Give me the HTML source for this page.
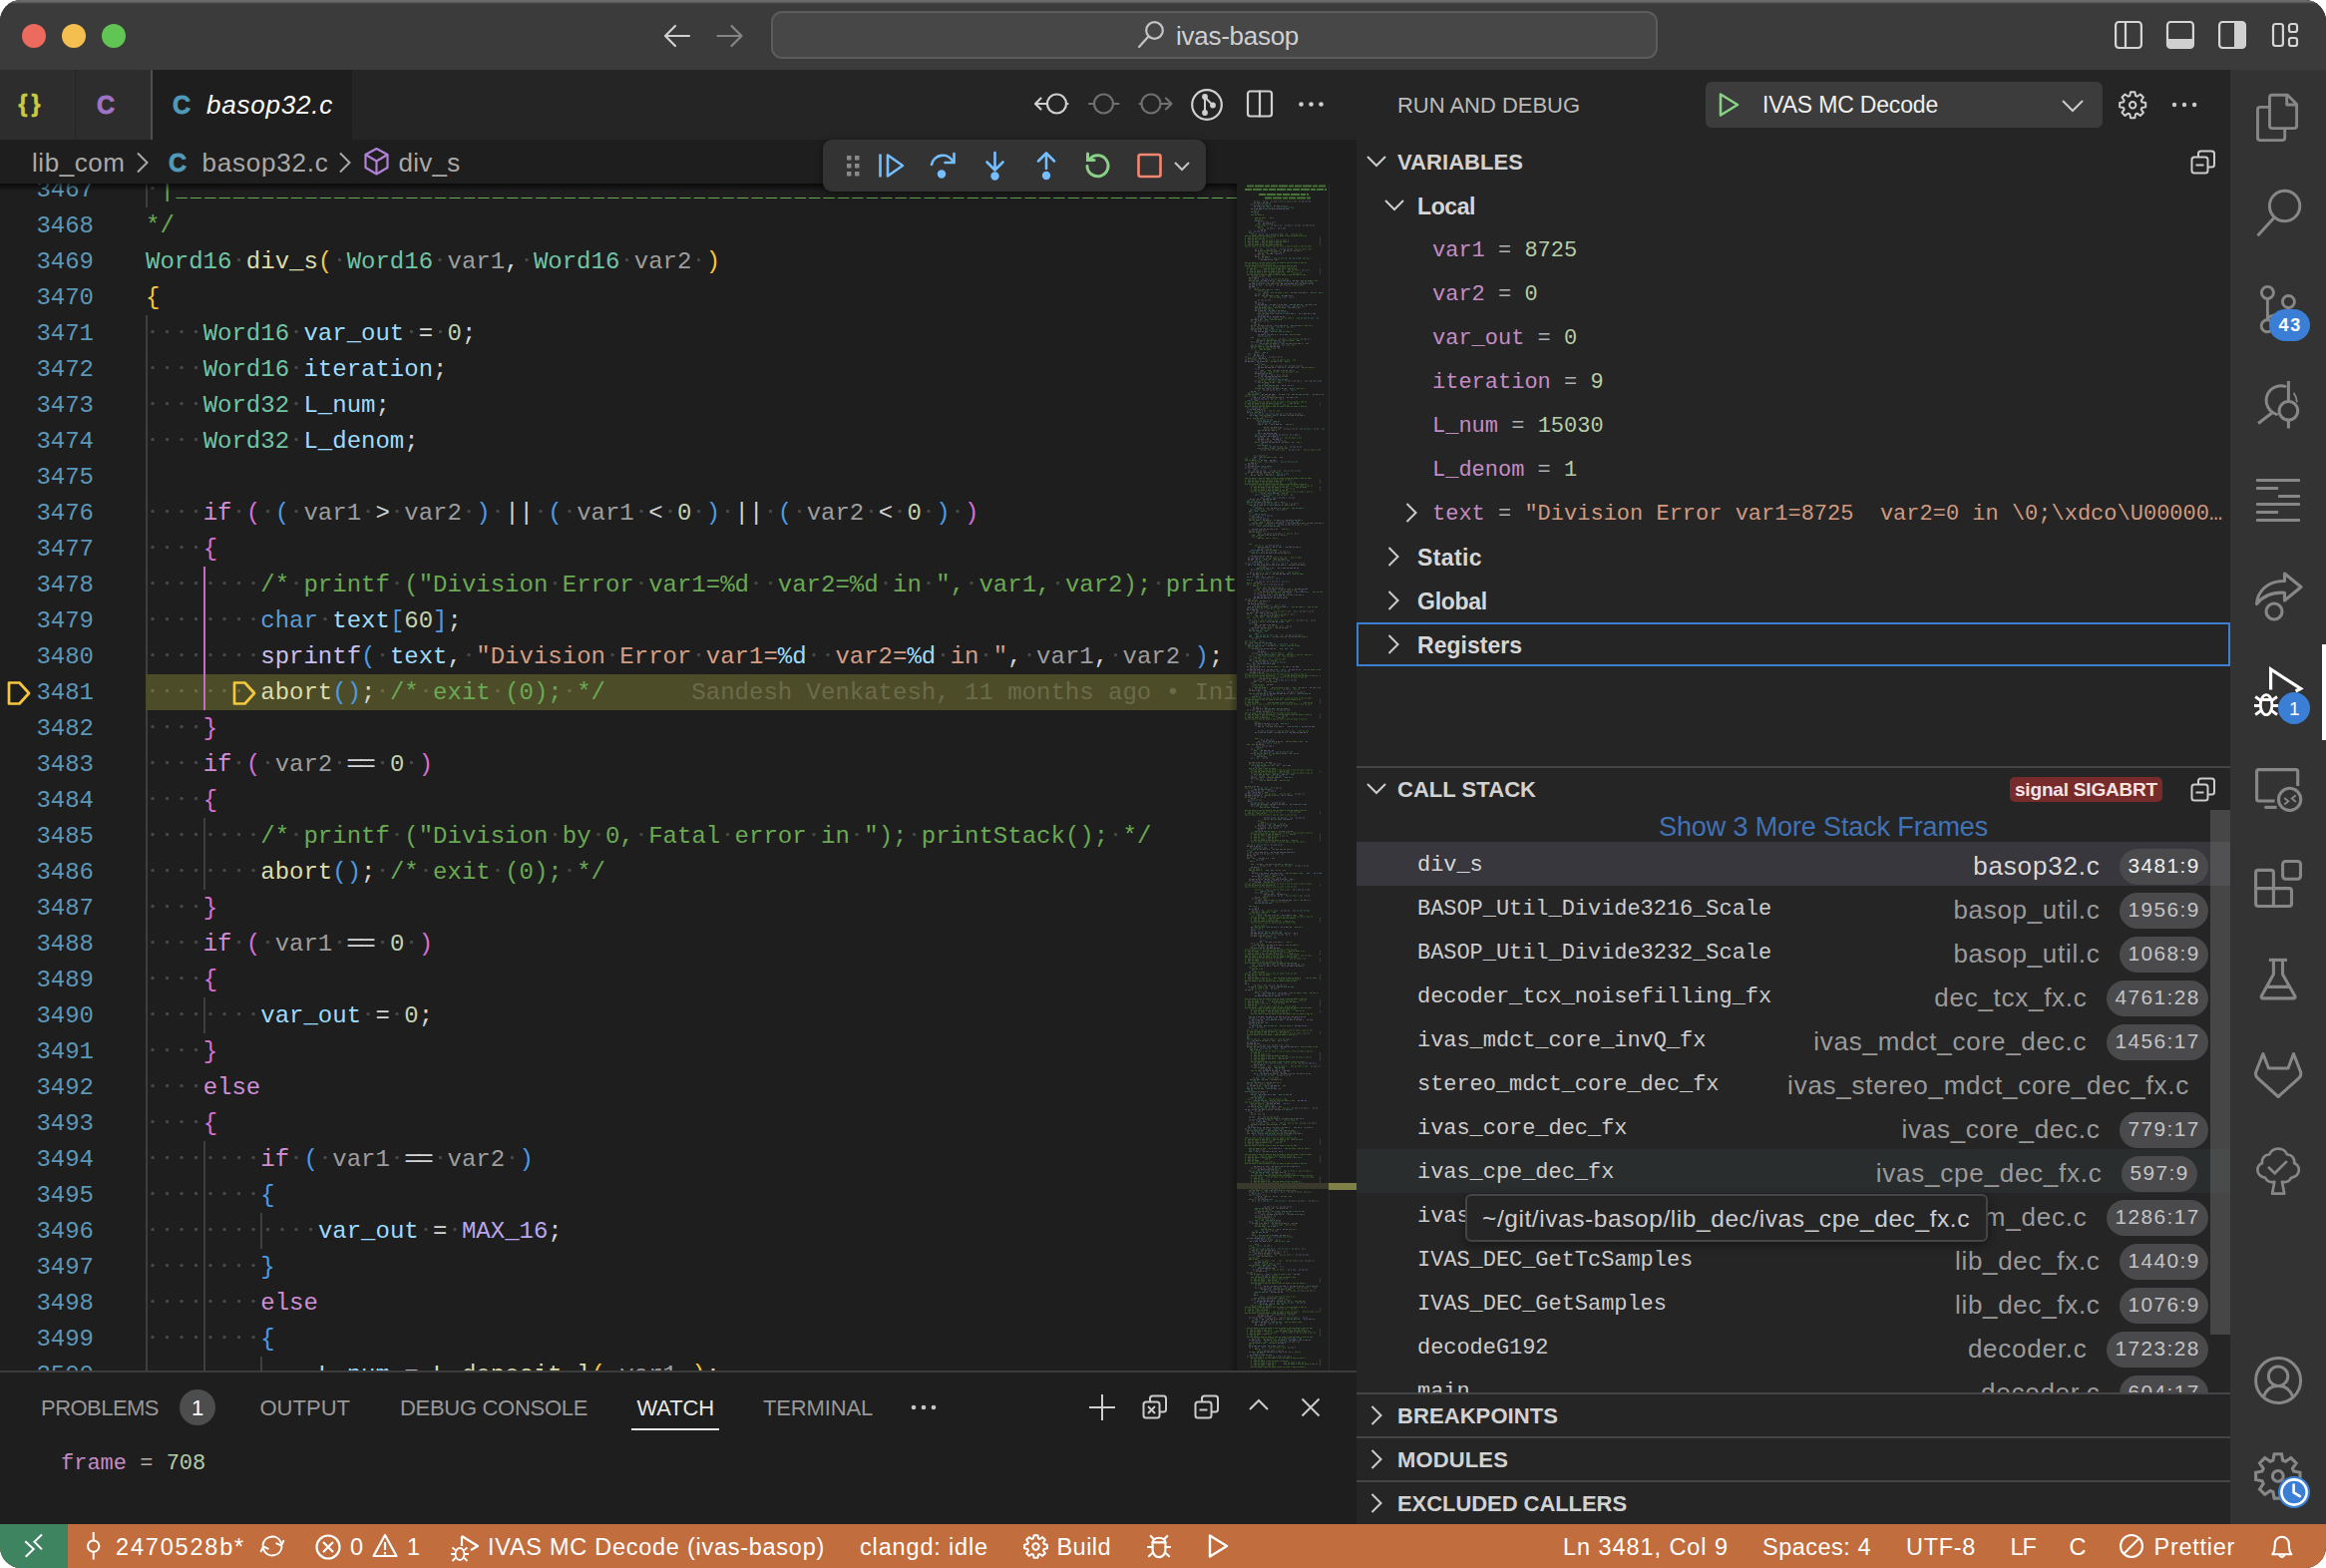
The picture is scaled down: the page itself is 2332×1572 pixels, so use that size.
<!DOCTYPE html>
<html><head><meta charset="utf-8"><title>basop32.c - ivas-basop</title>
<style>
html,body{margin:0;padding:0;background:#fff;}
body{width:2332px;height:1572px;overflow:hidden;font-family:"Liberation Sans",sans-serif;}
#win{position:absolute;left:0;top:0;width:2332px;height:1572px;border-radius:21px;overflow:hidden;background:#1e1e1e;}
.b{position:absolute;display:block;}
.t{position:absolute;white-space:pre;display:block;}
.code{position:absolute;left:0;width:1240px;height:36px;line-height:36px;font-family:"Liberation Mono",monospace;font-size:24px;white-space:pre;color:#d4d4d4;overflow:hidden;}
.ln{position:absolute;left:0;top:1px;width:94px;text-align:right;color:#5a97b8;}
.cd{position:absolute;left:146px;top:1px;}

.w{--d:#484848;background:radial-gradient(circle at 50% 43%,var(--d) 1.3px,transparent 2px)}
.ty{color:#6fc5a6}.fn{color:#dcdcaa}.mc{color:#c9c0f0}.mk{color:#b9a6ee}.pa{color:#9d9d9d}.va{color:#9cdcfe}
.nu{color:#c2d3ad}.kw{color:#d08fd4}.kb{color:#5a9bd5}.b1{color:#f3c73f}.b2{color:#d670d2}.b3{color:#4b9be6}
.cm{color:#6aa953}.cm .w{--d:#414b3c}.st{color:#d59d84}.fs{color:#9cdcfe}.bl{color:#6b6b49}
.hl .w{--d:#6a6a44}
.us{font-weight:bold;font-size:18.7px;letter-spacing:3.21px;margin-left:1.6px}
.eq{display:inline-block;letter-spacing:-4.6px;margin:0 6.9px 0 2.3px;transform:scaleX(1.24);transform-origin:12.1px 50%;}

</style></head><body><div id="win">
<div class="b" style="left:0px;top:0px;width:2332px;height:70px;background:#3b3b3b;"></div><div class="b" style="left:0px;top:0px;width:2332px;height:4px;background:linear-gradient(#6c6c6c,#6a6a6a 35%,#3b3b3b);"></div><div class="b" style="left:0px;top:70px;width:1360px;height:70px;background:#252526;"></div><div class="b" style="left:0px;top:140px;width:1360px;height:44px;background:#1e1e1e;"></div><div class="b" style="left:1360px;top:70px;width:876px;height:1458px;background:#252526;"></div><div class="b" style="left:2236px;top:70px;width:96px;height:1458px;background:#333333;"></div><div class="b" style="left:0px;top:1527.5px;width:2332px;height:45px;background:#c26d3e;"></div><div class="b" style="left:0px;top:1527.5px;width:67.5px;height:45px;background:#3e8461;"></div><div class="b" style="left:22px;top:24px;width:24px;height:24px;background:#ec6a5e;border-radius:50%;"></div><div class="b" style="left:62px;top:24px;width:24px;height:24px;background:#f4bf4f;border-radius:50%;"></div><div class="b" style="left:102px;top:24px;width:24px;height:24px;background:#61c554;border-radius:50%;"></div><svg class="b" style="left:660px;top:20px;" width="90" height="32" viewBox="0 0 90 32"><g fill="none" stroke-width="2.2" stroke-linecap="round" stroke-linejoin="round"><path stroke="#d0d0d0" d="M31 16H7.5M17 6L7 16l10 10"/><path stroke="#858585" d="M59.5 16H83M73.5 6l10 10-10 10"/></g></svg><div class="b" style="left:773px;top:11px;width:889px;height:48px;background:#474747;border:2px solid #5c5c5c;border-radius:11px;box-sizing:border-box;"></div><svg class="b" style="left:1138px;top:18px;" width="32" height="34" viewBox="0 0 32 34"><g fill="none" stroke="#c4c4c4" stroke-width="2.2" stroke-linecap="round"><circle cx="19.5" cy="12.5" r="8.3"/><path d="M13.5 18.5L4 29"/></g></svg><span class="t" style="left:1179.0px;top:18.0px;line-height:36px;font-size:26px;color:#d0d0d0;letter-spacing:-0.273px;">ivas-basop</span><svg class="b" style="left:2116px;top:17px;" width="196" height="36" viewBox="0 0 196 36"><g fill="none" stroke="#d6d6d6" stroke-width="2.200"><rect x="5.100" y="5" width="25.800" height="26" rx="3.200"/><path d="M15 5v26"/><rect x="57" y="5" width="25.900" height="26" rx="3.200"/><path d="M57 22h25.900v6a3 3 0 0 1-3 3h-19.900a3 3 0 0 1-3-3z" fill="#d0d0d0" stroke="none"/><rect x="109.100" y="5" width="25.800" height="26" rx="3.200"/><path d="M124 5h8a3 3 0 0 1 3 3v20a3 3 0 0 1-3 3h-8z" fill="#d0d0d0" stroke="none"/><rect x="163" y="7" width="9.900" height="22" rx="2.500"/><rect x="179" y="7" width="8" height="8" rx="2.300"/><rect x="179" y="21" width="8" height="8" rx="2.300"/></g></svg><div class="b" style="left:0px;top:70px;width:75px;height:70px;background:#2d2d2d;"></div><div class="b" style="left:76px;top:70px;width:75px;height:70px;background:#2d2d2d;"></div><div class="b" style="left:151px;top:70px;width:2px;height:70px;background:#4f4f4f;"></div><div class="b" style="left:153px;top:70px;width:200px;height:70px;background:#1e1e1e;"></div><span class="t" style="left:18.5px;top:88.0px;line-height:32px;font-size:23px;color:#cbcb41;font-weight:bold;-webkit-text-stroke:0.6px #cbcb41;">{</span><span class="t" style="left:31.5px;top:88.0px;line-height:32px;font-size:23px;color:#cbcb41;font-weight:bold;-webkit-text-stroke:0.6px #cbcb41;">}</span><span class="t" style="left:97.0px;top:88.0px;line-height:35px;font-size:25px;color:#a074c4;font-weight:bold;-webkit-text-stroke:0.8px #a074c4;">C</span><span class="t" style="left:173.0px;top:88.0px;line-height:35px;font-size:25px;color:#519aba;font-weight:bold;-webkit-text-stroke:0.8px #519aba;">C</span><span class="t" style="left:207.0px;top:87.0px;line-height:36px;font-size:26px;color:#ffffff;font-style:italic;letter-spacing:0.780px;">basop32.c</span><svg class="b" style="left:1030px;top:84px;" width="310" height="40" viewBox="0 0 310 40"><g fill="none" stroke-width="2.2" stroke-linecap="round" stroke-linejoin="round"><g stroke="#d0d0d0"><circle cx="29.5" cy="20" r="9.5"/><path d="M19 20H8.5M13.5 14.5L8 20l5.500 5.500M39.500 20h1"/></g><g stroke="#707070"><circle cx="76.500" cy="20" r="9.500"/><path d="M62 20h4.500M86.500 20h5"/></g><g stroke="#707070"><circle cx="124" cy="20" r="9.500"/><path d="M112.500 20h1.500M134 20h10M139 14.500l5.500 5.500-5.500 5.500"/></g><g stroke="#d0d0d0"><circle cx="180" cy="21" r="14.800"/><path d="M178 13v16" stroke-width="2"/><path d="M178.500 14l7.500 7.500" stroke-width="2"/></g><g fill="#d0d0d0" stroke="none"><circle cx="178" cy="13" r="2.900"/><circle cx="178" cy="29" r="2.900"/><circle cx="186" cy="21.500" r="2.900"/></g><g stroke="#d0d0d0"><rect x="221" y="7.500" width="24" height="25" rx="2.500"/><path d="M233 7.500v25"/></g><g fill="#d0d0d0" stroke="none"><circle cx="274.500" cy="20.500" r="2.300"/><circle cx="284.500" cy="20.500" r="2.300"/><circle cx="294.500" cy="20.500" r="2.300"/></g></g></svg><span class="t" style="left:32.0px;top:145.0px;line-height:36px;font-size:26px;color:#a9a9a9;letter-spacing:0.559px;">lib_com</span><svg class="b" style="left:134px;top:150px;" width="20" height="26" viewBox="0 0 20 26"><path d="M4 3.500l9.500 9.500L4 22.500" fill="none" stroke="#a9a9a9" stroke-width="2"/></svg><span class="t" style="left:169.0px;top:146.0px;line-height:35px;font-size:25px;color:#519aba;font-weight:bold;-webkit-text-stroke:0.8px #519aba;">C</span><span class="t" style="left:202.5px;top:145.0px;line-height:36px;font-size:26px;color:#a9a9a9;letter-spacing:0.780px;">basop32.c</span><svg class="b" style="left:337px;top:150px;" width="20" height="26" viewBox="0 0 20 26"><path d="M4 3.500l9.500 9.500L4 22.500" fill="none" stroke="#a9a9a9" stroke-width="2"/></svg><svg class="b" style="left:363px;top:146px;" width="30" height="32" viewBox="0 0 30 32"><g fill="none" stroke="#b180d7" stroke-width="2.2" stroke-linejoin="round"><path d="M14.500 3l11 6v13l-11 6.500-11-6.500v-13z"/><path d="M3.500 9l11 6.500 11-6.500M14.500 15.500v13"/></g></svg><span class="t" style="left:399.5px;top:145.0px;line-height:36px;font-size:26px;color:#a9a9a9;letter-spacing:0.261px;">div_s</span><div class="b" style="left:0;top:184px;width:1360px;height:1191px;overflow:hidden;background:#1e1e1e"><div class="b" style="left:0;top:-184px;width:1360px;height:1572px;"><div class="b" style="left:146px;top:172px;width:2px;height:36px;background:#3f3f3f;"></div><div class="b" style="left:146px;top:316px;width:2px;height:1080px;background:#3f3f3f;"></div><div class="b" style="left:204px;top:568px;width:2px;height:144px;background:#c56bc5;"></div><div class="b" style="left:204px;top:820px;width:2px;height:72px;background:#3f3f3f;"></div><div class="b" style="left:204px;top:1000px;width:2px;height:36px;background:#3f3f3f;"></div><div class="b" style="left:204px;top:1144px;width:2px;height:252px;background:#3f3f3f;"></div><div class="b" style="left:261px;top:1216px;width:2px;height:36px;background:#3f3f3f;"></div><div class="b" style="left:261px;top:1360px;width:2px;height:36px;background:#3f3f3f;"></div><div class="b" style="left:146px;top:676px;width:1094px;height:36px;background:#4d4c29;"></div><div class="b" style="left:204px;top:676px;width:2px;height:36px;background:#c56bc5;"></div><div class="code" style="top:172px"><span class="ln">3467</span><span class="cd"><span class="w"> </span><span class="cm">|</span><span class="cm us">__________________________________________________________________________________________</span></span></div><div class="code" style="top:208px"><span class="ln">3468</span><span class="cd"><span class="cm">*/</span></span></div><div class="code" style="top:244px"><span class="ln">3469</span><span class="cd"><span class="ty">Word16</span><span class="w"> </span><span class="fn">div_s</span><span class="b1">(</span><span class="w"> </span><span class="ty">Word16</span><span class="w"> </span><span class="pa">var1</span>,<span class="w"> </span><span class="ty">Word16</span><span class="w"> </span><span class="pa">var2</span><span class="w"> </span><span class="b1">)</span></span></div><div class="code" style="top:280px"><span class="ln">3470</span><span class="cd"><span class="b1">{</span></span></div><div class="code" style="top:316px"><span class="ln">3471</span><span class="cd"><span class="w"> </span><span class="w"> </span><span class="w"> </span><span class="w"> </span><span class="ty">Word16</span><span class="w"> </span><span class="va">var_out</span><span class="w"> </span>=<span class="w"> </span><span class="nu">0</span>;</span></div><div class="code" style="top:352px"><span class="ln">3472</span><span class="cd"><span class="w"> </span><span class="w"> </span><span class="w"> </span><span class="w"> </span><span class="ty">Word16</span><span class="w"> </span><span class="va">iteration</span>;</span></div><div class="code" style="top:388px"><span class="ln">3473</span><span class="cd"><span class="w"> </span><span class="w"> </span><span class="w"> </span><span class="w"> </span><span class="ty">Word32</span><span class="w"> </span><span class="va">L_num</span>;</span></div><div class="code" style="top:424px"><span class="ln">3474</span><span class="cd"><span class="w"> </span><span class="w"> </span><span class="w"> </span><span class="w"> </span><span class="ty">Word32</span><span class="w"> </span><span class="va">L_denom</span>;</span></div><div class="code" style="top:460px"><span class="ln">3475</span><span class="cd"></span></div><div class="code" style="top:496px"><span class="ln">3476</span><span class="cd"><span class="w"> </span><span class="w"> </span><span class="w"> </span><span class="w"> </span><span class="kw">if</span><span class="w"> </span><span class="b2">(</span><span class="w"> </span><span class="b3">(</span><span class="w"> </span><span class="pa">var1</span><span class="w"> </span>&gt;<span class="w"> </span><span class="pa">var2</span><span class="w"> </span><span class="b3">)</span><span class="w"> </span>||<span class="w"> </span><span class="b3">(</span><span class="w"> </span><span class="pa">var1</span><span class="w"> </span>&lt;<span class="w"> </span><span class="nu">0</span><span class="w"> </span><span class="b3">)</span><span class="w"> </span>||<span class="w"> </span><span class="b3">(</span><span class="w"> </span><span class="pa">var2</span><span class="w"> </span>&lt;<span class="w"> </span><span class="nu">0</span><span class="w"> </span><span class="b3">)</span><span class="w"> </span><span class="b2">)</span></span></div><div class="code" style="top:532px"><span class="ln">3477</span><span class="cd"><span class="w"> </span><span class="w"> </span><span class="w"> </span><span class="w"> </span><span class="b2">{</span></span></div><div class="code" style="top:568px"><span class="ln">3478</span><span class="cd"><span class="w"> </span><span class="w"> </span><span class="w"> </span><span class="w"> </span><span class="w"> </span><span class="w"> </span><span class="w"> </span><span class="w"> </span><span class="cm">/*<span class="w"> </span>printf<span class="w"> </span>("Division<span class="w"> </span>Error<span class="w"> </span>var1=%d<span class="w"> </span><span class="w"> </span>var2=%d<span class="w"> </span>in<span class="w"> </span>",<span class="w"> </span>var1,<span class="w"> </span>var2);<span class="w"> </span>printStack();<span class="w"> </span>*/</span></span></div><div class="code" style="top:604px"><span class="ln">3479</span><span class="cd"><span class="w"> </span><span class="w"> </span><span class="w"> </span><span class="w"> </span><span class="w"> </span><span class="w"> </span><span class="w"> </span><span class="w"> </span><span class="kb">char</span><span class="w"> </span><span class="va">text</span><span class="b3">[</span><span class="nu">60</span><span class="b3">]</span>;</span></div><div class="code" style="top:640px"><span class="ln">3480</span><span class="cd"><span class="w"> </span><span class="w"> </span><span class="w"> </span><span class="w"> </span><span class="w"> </span><span class="w"> </span><span class="w"> </span><span class="w"> </span><span class="mc">sprintf</span><span class="b3">(</span><span class="w"> </span><span class="va">text</span>,<span class="w"> </span><span class="st">"Division<span class="w"> </span>Error<span class="w"> </span>var1=</span><span class="fs">%d</span><span class="st"><span class="w"> </span><span class="w"> </span>var2=</span><span class="fs">%d</span><span class="st"><span class="w"> </span>in<span class="w"> </span>"</span>,<span class="w"> </span><span class="pa">var1</span>,<span class="w"> </span><span class="pa">var2</span><span class="w"> </span><span class="b3">)</span>;</span></div><div class="code hl" style="top:676px"><span class="ln">3481</span><span class="cd"><span class="w"> </span><span class="w"> </span><span class="w"> </span><span class="w"> </span><span class="w"> </span><span class="w"> </span><span class="w"> </span><span class="w"> </span><span class="fn">abort</span><span class="b3">()</span>;<span class="w"> </span><span class="cm">/*<span class="w"> </span>exit<span class="w"> </span>(0);<span class="w"> </span>*/</span><span class="bl">      Sandesh Venkatesh, 11 months ago • Initial commit</span></span></div><div class="code" style="top:712px"><span class="ln">3482</span><span class="cd"><span class="w"> </span><span class="w"> </span><span class="w"> </span><span class="w"> </span><span class="b2">}</span></span></div><div class="code" style="top:748px"><span class="ln">3483</span><span class="cd"><span class="w"> </span><span class="w"> </span><span class="w"> </span><span class="w"> </span><span class="kw">if</span><span class="w"> </span><span class="b2">(</span><span class="w"> </span><span class="pa">var2</span><span class="w"> </span><span class="eq">==</span><span class="w"> </span><span class="nu">0</span><span class="w"> </span><span class="b2">)</span></span></div><div class="code" style="top:784px"><span class="ln">3484</span><span class="cd"><span class="w"> </span><span class="w"> </span><span class="w"> </span><span class="w"> </span><span class="b2">{</span></span></div><div class="code" style="top:820px"><span class="ln">3485</span><span class="cd"><span class="w"> </span><span class="w"> </span><span class="w"> </span><span class="w"> </span><span class="w"> </span><span class="w"> </span><span class="w"> </span><span class="w"> </span><span class="cm">/*<span class="w"> </span>printf<span class="w"> </span>("Division<span class="w"> </span>by<span class="w"> </span>0,<span class="w"> </span>Fatal<span class="w"> </span>error<span class="w"> </span>in<span class="w"> </span>");<span class="w"> </span>printStack();<span class="w"> </span>*/</span></span></div><div class="code" style="top:856px"><span class="ln">3486</span><span class="cd"><span class="w"> </span><span class="w"> </span><span class="w"> </span><span class="w"> </span><span class="w"> </span><span class="w"> </span><span class="w"> </span><span class="w"> </span><span class="fn">abort</span><span class="b3">()</span>;<span class="w"> </span><span class="cm">/*<span class="w"> </span>exit<span class="w"> </span>(0);<span class="w"> </span>*/</span></span></div><div class="code" style="top:892px"><span class="ln">3487</span><span class="cd"><span class="w"> </span><span class="w"> </span><span class="w"> </span><span class="w"> </span><span class="b2">}</span></span></div><div class="code" style="top:928px"><span class="ln">3488</span><span class="cd"><span class="w"> </span><span class="w"> </span><span class="w"> </span><span class="w"> </span><span class="kw">if</span><span class="w"> </span><span class="b2">(</span><span class="w"> </span><span class="pa">var1</span><span class="w"> </span><span class="eq">==</span><span class="w"> </span><span class="nu">0</span><span class="w"> </span><span class="b2">)</span></span></div><div class="code" style="top:964px"><span class="ln">3489</span><span class="cd"><span class="w"> </span><span class="w"> </span><span class="w"> </span><span class="w"> </span><span class="b2">{</span></span></div><div class="code" style="top:1000px"><span class="ln">3490</span><span class="cd"><span class="w"> </span><span class="w"> </span><span class="w"> </span><span class="w"> </span><span class="w"> </span><span class="w"> </span><span class="w"> </span><span class="w"> </span><span class="va">var_out</span><span class="w"> </span>=<span class="w"> </span><span class="nu">0</span>;</span></div><div class="code" style="top:1036px"><span class="ln">3491</span><span class="cd"><span class="w"> </span><span class="w"> </span><span class="w"> </span><span class="w"> </span><span class="b2">}</span></span></div><div class="code" style="top:1072px"><span class="ln">3492</span><span class="cd"><span class="w"> </span><span class="w"> </span><span class="w"> </span><span class="w"> </span><span class="kw">else</span></span></div><div class="code" style="top:1108px"><span class="ln">3493</span><span class="cd"><span class="w"> </span><span class="w"> </span><span class="w"> </span><span class="w"> </span><span class="b2">{</span></span></div><div class="code" style="top:1144px"><span class="ln">3494</span><span class="cd"><span class="w"> </span><span class="w"> </span><span class="w"> </span><span class="w"> </span><span class="w"> </span><span class="w"> </span><span class="w"> </span><span class="w"> </span><span class="kw">if</span><span class="w"> </span><span class="b3">(</span><span class="w"> </span><span class="pa">var1</span><span class="w"> </span><span class="eq">==</span><span class="w"> </span><span class="pa">var2</span><span class="w"> </span><span class="b3">)</span></span></div><div class="code" style="top:1180px"><span class="ln">3495</span><span class="cd"><span class="w"> </span><span class="w"> </span><span class="w"> </span><span class="w"> </span><span class="w"> </span><span class="w"> </span><span class="w"> </span><span class="w"> </span><span class="b3">{</span></span></div><div class="code" style="top:1216px"><span class="ln">3496</span><span class="cd"><span class="w"> </span><span class="w"> </span><span class="w"> </span><span class="w"> </span><span class="w"> </span><span class="w"> </span><span class="w"> </span><span class="w"> </span><span class="w"> </span><span class="w"> </span><span class="w"> </span><span class="w"> </span><span class="va">var_out</span><span class="w"> </span>=<span class="w"> </span><span class="mk">MAX_16</span>;</span></div><div class="code" style="top:1252px"><span class="ln">3497</span><span class="cd"><span class="w"> </span><span class="w"> </span><span class="w"> </span><span class="w"> </span><span class="w"> </span><span class="w"> </span><span class="w"> </span><span class="w"> </span><span class="b3">}</span></span></div><div class="code" style="top:1288px"><span class="ln">3498</span><span class="cd"><span class="w"> </span><span class="w"> </span><span class="w"> </span><span class="w"> </span><span class="w"> </span><span class="w"> </span><span class="w"> </span><span class="w"> </span><span class="kw">else</span></span></div><div class="code" style="top:1324px"><span class="ln">3499</span><span class="cd"><span class="w"> </span><span class="w"> </span><span class="w"> </span><span class="w"> </span><span class="w"> </span><span class="w"> </span><span class="w"> </span><span class="w"> </span><span class="b3">{</span></span></div><div class="code" style="top:1360px"><span class="ln">3500</span><span class="cd"><span class="w"> </span><span class="w"> </span><span class="w"> </span><span class="w"> </span><span class="w"> </span><span class="w"> </span><span class="w"> </span><span class="w"> </span><span class="w"> </span><span class="w"> </span><span class="w"> </span><span class="w"> </span><span class="va">L_num</span><span class="w"> </span>=<span class="w"> </span><span class="fn">L_deposit_l</span><span class="b1">(</span><span class="w"> </span><span class="pa">var1</span><span class="w"> </span><span class="b1">)</span>;</span></div><svg class="b" style="left:5.5px;top:681.5px;" width="27" height="27" viewBox="0 0 27 27"><path d="M3 2.500h10.500l9.500 10.500-9.500 10.500H3z" fill="none" stroke="#f5c73d" stroke-width="2.700" stroke-linejoin="round"/></svg><svg class="b" style="left:231.5px;top:681.5px;" width="27" height="27" viewBox="0 0 27 27"><path d="M3 2.500h10.500l9.500 10.500-9.500 10.500H3z" fill="none" stroke="#f5c73d" stroke-width="2.700" stroke-linejoin="round"/></svg></div></div><div class="b" style="left:0px;top:184px;width:1240px;height:8px;background:linear-gradient(#000000aa,#00000000);"></div><svg class="b" style="left:1240px;top:184px;background:#1e1e1e;" width="92" height="1191" viewBox="0 0 92 1191"><path d="M17 18.0h6M26 18.0h5M34 18.0h8M17 19.5h18M17 22.5h18M37 22.5h14M32 25.5h6M17 30.0h5M24 37.5h3M35 39.0h4M34 42.0h12M48 42.0h8M58 42.0h6M21 43.5h4M24 46.5h5M12 48.0h3M15 51.0h5M49 51.0h3M18 66.0h4M47 67.5h8M57 67.5h8M34 69.0h14M30 70.5h6M25 73.5h8M15 93.0h6M22 93.0h6M24 97.5h14M12 100.5h18M31 100.5h12M63 100.5h14M29 102.0h8M40 102.0h14M12 105.0h3M17 105.0h5M54 109.5h18M18 111.0h6M26 111.0h6M52 112.5h4M21 117.0h6M28 117.0h6M18 118.5h3M33 121.5h10M44 121.5h6M69 121.5h12M52 124.5h12M32 127.5h18M26 130.5h12M21 132.0h12M80 135.0h3M14 136.5h12M18 138.0h14M14 142.5h5M21 142.5h14M23 147.0h3M31 151.5h10M42 156.0h8M64 156.0h10M23 160.5h5M45 160.5h3M49 160.5h18M33 162.0h10M17 171.0h5M17 172.5h10M32 174.0h14M14 177.0h12M34 178.5h12M39 183.0h12M52 183.0h14M51 184.5h12M18 186.0h5M37 187.5h14M34 192.0h4M40 192.0h4M46 192.0h5M18 193.5h4M24 193.5h3M18 198.0h12M48 198.0h18M27 201.0h5M28 204.0h5M36 205.5h14M21 207.0h3M42 211.5h12M76 211.5h12M35 213.0h4M30 214.5h18M50 214.5h12M43 216.0h4M10 225.0h3M13 226.5h6M18 228.0h12M49 231.0h18M43 232.5h6M51 232.5h18M25 234.0h12M27 244.5h5M34 244.5h12M47 246.0h14M21 249.0h3M30 255.0h3M36 255.0h10M21 256.5h12M21 258.0h14M38 258.0h12M45 259.5h8M55 259.5h3M40 264.0h6M48 264.0h3M24 267.0h5M52 267.0h12M24 277.5h6M11 280.5h10M11 283.5h8M24 285.0h10M33 288.0h12M11 289.5h14M14 291.0h3M20 291.0h18M14 292.5h5M24 310.5h5M54 312.0h3M18 319.5h18M38 319.5h4M44 319.5h4M45 321.0h18M19 325.5h8M30 325.5h3M34 325.5h10M24 331.5h5M12 333.0h12M12 336.0h10M26 337.5h8M37 337.5h10M49 337.5h18M18 339.0h3M30 340.5h18M70 340.5h18M28 342.0h10M68 342.0h4M15 346.5h14M30 346.5h12M27 351.0h10M38 351.0h10M21 352.5h14M29 363.0h6M56 364.5h8M21 366.0h14M34 369.0h6M43 369.0h10M29 370.5h14M44 370.5h10M14 373.5h14M11 375.0h3M48 375.0h3M32 376.5h3M11 378.0h5M8 381.0h6M54 381.0h14M17 382.5h14M32 382.5h18M52 382.5h18M23 384.0h6M26 385.5h12M10 391.5h4M16 391.5h18M16 393.0h10M25 394.5h4M26 396.0h10M17 400.5h8M32 406.5h18M23 409.5h10M17 411.0h10M23 412.5h12M50 412.5h18M30 414.0h6M37 415.5h14M8 417.0h6M16 417.0h4M23 418.5h10M11 420.0h4M17 420.0h3M20 421.5h8M17 423.0h18M34 424.5h18M15 426.0h8M24 426.0h4M16 429.0h18M63 429.0h14M10 430.5h6M30 430.5h10M24 432.0h10M35 432.0h18M54 432.0h4M60 438.0h12M74 438.0h5M23 439.5h5M50 439.5h3M23 442.5h18M43 444.0h4M24 445.5h12M39 445.5h5M45 445.5h6M12 447.0h10M31 447.0h3M44 453.0h3M49 453.0h18M36 454.5h14M15 456.0h8M8 460.5h3M8 462.0h10M31 463.5h10M15 466.5h14M54 466.5h3M21 469.5h8M15 471.0h18M18 475.5h5M13 478.5h3M16 481.5h3M13 483.0h10M10 484.5h14M46 484.5h8M13 486.0h10M30 487.5h12M45 487.5h4M13 489.0h12M26 489.0h6M33 489.0h5M13 490.5h14M23 496.5h12M36 496.5h5M17 498.0h12M54 498.0h6M23 499.5h3M62 505.5h8M73 505.5h12M18 507.0h12M46 507.0h8M12 508.5h12M51 510.0h18M10 523.5h4M16 525.0h8M16 526.5h10M28 528.0h10M26 529.5h10M18 541.5h8M27 541.5h10M39 541.5h3M28 543.0h8M30 544.5h18M21 549.0h18M38 550.5h6M32 559.5h14M69 559.5h3M19 561.0h10M14 567.0h4M23 570.0h3M14 571.5h5M36 571.5h14M53 571.5h3M57 571.5h5M20 576.0h3M26 576.0h5M12 580.5h14M29 580.5h6M33 582.0h12M35 583.5h3M17 592.5h4M30 594.0h3M30 597.0h6M14 600.0h3M8 604.5h14M21 606.0h5M58 612.0h10M8 613.5h18M28 613.5h14M8 615.0h14M24 615.0h5M14 616.5h5M33 622.5h18M21 642.0h14M32 643.5h3M37 643.5h14M18 645.0h4M21 646.5h8M31 646.5h4M37 646.5h4M42 649.5h14M10 664.5h14M34 666.0h3M23 667.5h10M36 667.5h6M34 670.5h5M16 672.0h10M27 672.0h10M10 673.5h5M10 675.0h6M22 676.5h10M20 682.5h6M29 682.5h18M23 684.0h12M58 684.0h14M39 688.5h5M15 691.5h18M34 691.5h12M12 697.5h14M28 697.5h5M36 697.5h14M47 699.0h8M31 709.5h5M29 711.0h3M40 712.5h10M68 714.0h5M18 715.5h5M15 717.0h10M64 718.5h10M15 729.0h8M28 733.5h14M14 748.5h4M14 750.0h5M35 750.0h6M43 750.0h3M14 753.0h18M34 753.0h5M41 753.0h6M57 753.0h4M14 754.5h6M23 756.0h3M29 760.5h18M30 763.5h18M21 765.0h18M14 766.5h14M45 784.5h4M50 784.5h18M24 787.5h3M12 790.5h3M8 802.5h4M17 804.0h8M40 804.0h10M11 805.5h8M29 805.5h3M34 807.0h8M8 808.5h8M28 810.0h3M39 835.5h14M55 835.5h14M23 837.0h5M50 838.5h18M70 838.5h6M12 840.0h18M12 841.5h14M29 841.5h3M20 846.0h8M16 859.5h18M23 864.0h10M35 864.0h12M17 865.5h12M17 882.0h10M48 882.0h4M14 885.0h14M74 885.0h10M39 888.0h4M26 889.5h18M24 892.5h18M44 892.5h14M60 892.5h14M40 894.0h14M16 897.0h6M25 898.5h6M34 898.5h12M18 901.5h10M10 903.0h12M13 904.5h12M28 904.5h4M14 906.0h4M21 910.5h10M14 912.0h14M26 921.0h18M11 925.5h14M32 927.0h12M55 927.0h18M22 928.5h14M38 928.5h10M18 930.0h8M14 931.5h3M14 933.0h5M21 937.5h8M45 937.5h8M63 942.0h18M14 943.5h14M11 945.0h6M26 946.5h8M36 946.5h18M68 946.5h8M43 949.5h3M53 951.0h8M49 952.5h18M26 970.5h14M17 985.5h10M35 985.5h14M14 987.0h14M27 990.0h18M35 991.5h6M48 993.0h10M15 1008.0h8M35 1008.0h10M12 1011.0h10M25 1011.0h18M51 1011.0h14M21 1012.5h4M26 1014.0h4M36 1015.5h5M44 1015.5h6M21 1018.5h3M25 1018.5h12M15 1020.0h4M52 1020.0h18M72 1020.0h10M27 1026.0h14M25 1027.5h8M35 1027.5h3M40 1027.5h12M25 1029.0h3M29 1029.0h6M35 1030.5h4M26 1032.0h3M38 1032.0h10M50 1032.0h4M30 1033.5h18M51 1033.5h18M18 1035.0h18M30 1039.5h14M15 1042.5h18M35 1042.5h18M55 1042.5h6M18 1045.5h6M35 1050.0h6M43 1054.5h10M39 1059.0h4M23 1060.5h12M18 1063.5h4M27 1065.0h8M55 1068.0h8M12 1071.0h14M28 1071.0h18M47 1071.0h4M18 1072.5h18M37 1072.5h6M12 1074.0h10M38 1074.0h3M25 1075.5h12M68 1080.0h10M18 1081.5h6M31 1084.5h3M43 1086.0h4M29 1089.0h4M19 1090.5h12M10 1092.0h8M34 1105.5h18M53 1105.5h14M24 1108.5h10M41 1110.0h5M61 1110.0h18M17 1113.0h4M30 1117.5h6M14 1119.0h5M40 1120.5h8M51 1120.5h4M21 1134.0h12M44 1134.0h5M52 1134.0h6M21 1135.5h14M28 1137.0h12M25 1138.5h3M30 1138.5h18M25 1140.0h14M15 1141.5h18M43 1143.0h3M12 1159.5h12M27 1159.5h8M52 1161.0h12M51 1167.0h8M12 1171.5h6M39 1171.5h12M52 1171.5h4M10 1176.0h18M31 1176.0h4M47 1176.0h8" stroke="#b8b8b8" stroke-opacity="0.34" stroke-width="0.900" stroke-dasharray="2 1 3 1 1 1" fill="none"/><path d="M43 18.0h18M28 25.5h3M17 27.0h6M14 31.5h14M18 34.5h12M18 36.0h8M21 39.0h3M18 42.0h14M21 45.0h6M55 51.0h10M8 52.5h62M11 54.0h28M8 54.0h1M83 54.0h1M11 55.5h9M22 55.5h6M8 55.5h1M83 55.5h1M11 57.0h12M25 57.0h28M8 57.0h1M83 57.0h1M11 58.5h12M25 58.5h28M8 58.5h1M83 58.5h1M11 60.0h34M8 60.0h1M83 60.0h1M11 61.5h34M8 61.5h1M83 61.5h1M8 63.0h68M58 66.0h18M23 67.5h6M30 67.5h14M21 69.0h10M21 70.5h6M25 72.0h3M21 75.0h14M66 75.0h8M38 76.5h3M8 79.5h62M11 81.0h28M8 81.0h1M83 81.0h1M8 82.5h52M10 84.0h50M13 85.5h6M27 85.5h22M51 85.5h9M10 85.5h1M83 85.5h1M13 87.0h34M51 87.0h22M10 87.0h1M83 87.0h1M13 88.5h34M50 88.5h6M10 88.5h1M83 88.5h1M13 90.0h16M32 90.0h16M56 90.0h9M10 90.0h1M83 90.0h1M10 91.5h60M34 96.0h6M41 96.0h12M12 97.5h10M64 97.5h18M35 99.0h12M49 99.0h8M56 102.0h12M18 106.5h10M21 108.0h12M34 109.5h18M74 109.5h6M25 112.5h18M27 114.0h4M33 114.0h18M65 123.0h5M18 124.5h18M38 124.5h12M21 129.0h6M21 130.5h3M44 135.0h14M28 136.5h4M34 136.5h12M17 141.0h6M68 142.5h8M50 144.0h8M14 145.5h18M34 145.5h3M42 148.5h14M53 151.5h12M20 156.0h4M26 156.0h14M52 156.0h10M46 157.5h12M29 159.0h6M29 160.5h14M69 160.5h3M50 162.0h3M55 162.0h4M14 163.5h14M22 165.0h18M23 166.5h12M18 169.5h5M11 175.5h8M28 177.0h5M36 177.0h18M56 177.0h3M18 181.5h5M28 183.0h4M34 183.0h3M65 184.5h14M24 187.5h4M31 187.5h3M32 189.0h10M45 189.0h18M41 193.5h10M21 195.0h6M24 196.5h6M32 198.0h8M21 199.5h18M41 199.5h3M21 204.0h5M34 204.0h8M18 205.5h10M53 205.5h5M60 205.5h8M11 211.5h12M8 213.0h12M23 213.0h10M34 216.0h6M8 219.0h62M11 220.5h34M53 220.5h9M8 220.5h1M83 220.5h1M11 222.0h22M36 222.0h6M46 222.0h6M8 222.0h1M83 222.0h1M8 223.5h62M26 225.0h5M20 226.5h8M32 228.0h6M40 228.0h4M23 232.5h12M16 235.5h10M49 241.5h8M27 246.0h18M21 247.5h6M35 247.5h5M48 255.0h18M18 259.5h5M60 259.5h5M21 265.5h18M41 265.5h10M31 267.0h18M67 267.0h18M17 274.5h4M23 274.5h18M43 274.5h4M8 276.0h4M8 277.5h14M14 279.0h12M35 289.5h8M8 295.5h68M11 297.0h9M22 297.0h6M30 297.0h28M8 297.0h1M83 297.0h1M11 298.5h34M8 298.5h1M83 298.5h1M11 300.0h34M53 300.0h6M8 300.0h1M83 300.0h1M8 301.5h62M14 303.0h62M17 304.5h34M59 304.5h12M14 304.5h1M83 304.5h1M17 306.0h28M49 306.0h9M14 306.0h1M83 306.0h1M17 307.5h34M14 307.5h1M83 307.5h1M14 309.0h62M45 310.5h6M40 312.0h12M30 315.0h3M15 318.0h8M10 321.0h5M23 322.5h8M48 322.5h5M46 325.5h6M12 328.5h4M24 328.5h6M12 337.5h12M23 339.0h14M59 339.0h4M15 340.5h12M60 342.0h5M21 343.5h4M45 346.5h8M12 349.5h14M21 351.0h4M50 351.0h6M15 352.5h3M15 354.0h10M21 355.5h6M29 355.5h5M36 355.5h5M12 361.5h4M18 363.0h8M29 367.5h14M29 375.0h18M54 375.0h12M27 376.5h4M37 376.5h14M18 378.0h10M19 390.0h8M36 390.0h12M56 391.5h12M10 400.5h5M16 402.0h10M16 403.5h5M26 405.0h4M31 405.0h10M20 406.5h4M51 406.5h5M17 408.0h6M43 408.0h18M34 409.5h10M76 409.5h10M30 411.0h6M38 411.0h10M47 414.0h3M11 418.5h10M38 423.0h5M20 424.5h12M55 424.5h14M71 424.5h10M40 426.0h3M37 429.0h18M10 432.0h5M23 433.5h5M30 433.5h18M10 435.0h4M16 435.0h12M24 438.0h18M44 438.0h14M15 439.5h6M18 442.5h3M31 444.0h10M24 447.0h5M21 450.0h5M38 453.0h4M58 454.5h14M8 459.0h12M54 462.0h6M44 463.5h5M51 463.5h8M11 465.0h14M43 466.5h3M34 471.0h14M41 472.5h6M50 472.5h8M60 472.5h6M68 472.5h8M12 474.0h8M22 474.0h3M26 474.0h18M46 474.0h14M22 477.0h8M38 477.0h12M18 478.5h14M34 478.5h6M25 484.5h4M30 484.5h14M67 487.5h18M8 492.0h62M11 493.5h28M47 493.5h34M8 493.5h1M83 493.5h1M8 495.0h62M32 498.0h4M29 499.5h12M14 501.0h4M17 502.5h10M15 504.0h14M18 505.5h14M35 505.5h18M56 505.5h4M33 507.0h10M57 507.0h6M27 508.5h3M12 511.5h10M23 511.5h8M53 511.5h5M8 516.0h68M11 517.5h34M48 517.5h16M8 517.5h1M83 517.5h1M11 519.0h12M8 519.0h1M83 519.0h1M11 520.5h12M31 520.5h28M67 520.5h9M8 520.5h1M83 520.5h1M8 522.0h68M27 525.0h3M40 526.5h14M8 531.0h52M11 532.5h28M41 532.5h34M8 532.5h1M83 532.5h1M11 534.0h22M35 534.0h6M45 534.0h6M8 534.0h1M83 534.0h1M11 535.5h22M41 535.5h6M8 535.5h1M83 535.5h1M8 537.0h62M18 540.0h5M37 543.0h5M41 549.0h18M62 549.0h10M18 556.5h5M49 559.5h18M37 561.0h6M10 562.5h3M15 562.5h6M25 564.0h3M20 567.0h5M17 568.5h4M20 571.5h14M32 573.0h5M20 574.5h10M12 582.0h18M25 585.0h4M22 586.5h4M28 586.5h12M14 588.0h62M17 589.5h22M43 589.5h9M14 589.5h1M83 589.5h1M14 591.0h62M22 592.5h12M34 594.0h3M14 595.5h6M23 595.5h5M31 595.5h14M23 598.5h18M43 598.5h10M8 606.0h5M28 610.5h4M28 612.0h12M43 612.0h12M15 618.0h10M20 622.5h12M23 625.5h10M8 628.5h62M11 630.0h34M53 630.0h12M8 630.0h1M83 630.0h1M11 631.5h6M20 631.5h9M8 631.5h1M83 631.5h1M8 633.0h52M53 636.0h4M27 637.5h5M34 637.5h12M24 640.5h5M43 642.0h6M21 643.5h8M27 649.5h14M14 651.0h62M17 652.5h28M53 652.5h6M14 652.5h1M83 652.5h1M17 654.0h34M14 654.0h1M83 654.0h1M17 655.5h6M31 655.5h9M14 655.5h1M83 655.5h1M17 657.0h22M14 657.0h1M83 657.0h1M17 658.5h34M55 658.5h6M14 658.5h1M83 658.5h1M14 660.0h56M10 663.0h8M16 667.5h6M43 667.5h14M10 676.5h4M35 676.5h4M13 679.5h5M14 682.5h4M44 684.0h12M12 687.0h14M12 688.5h14M46 688.5h3M49 691.5h18M28 694.5h5M36 694.5h4M26 696.0h12M27 700.5h10M8 702.0h68M11 703.5h28M8 703.5h1M83 703.5h1M8 705.0h52M18 708.0h8M29 708.0h5M36 708.0h18M27 712.5h10M49 714.0h18M26 715.5h5M21 718.5h3M27 718.5h14M57 718.5h5M34 720.0h3M39 720.0h14M12 724.5h8M30 729.0h12M15 730.5h8M25 730.5h8M12 732.0h18M63 733.5h4M14 735.0h62M17 736.5h12M32 736.5h28M14 736.5h1M83 736.5h1M17 738.0h6M25 738.0h16M14 738.0h1M83 738.0h1M17 739.5h28M48 739.5h9M14 739.5h1M83 739.5h1M14 741.0h46M17 744.0h14M18 745.5h10M58 745.5h8M22 754.5h8M50 760.5h5M17 763.5h12M49 763.5h14M14 765.0h4M8 768.0h52M11 769.5h12M26 769.5h22M52 769.5h16M8 769.5h1M83 769.5h1M11 771.0h16M29 771.0h28M8 771.0h1M83 771.0h1M11 772.5h34M53 772.5h9M8 772.5h1M83 772.5h1M8 774.0h68M8 775.5h52M11 777.0h34M53 777.0h16M8 777.0h1M83 777.0h1M11 778.5h12M8 778.5h1M83 778.5h1M11 780.0h34M8 780.0h1M83 780.0h1M8 781.5h52M15 783.0h4M65 783.0h4M15 784.5h14M37 784.5h5M12 786.0h4M17 786.0h4M15 787.5h8M17 790.5h12M8 792.0h52M11 793.5h9M22 793.5h12M8 793.5h1M83 793.5h1M11 795.0h9M8 795.0h1M83 795.0h1M11 796.5h22M37 796.5h28M69 796.5h12M8 796.5h1M83 796.5h1M11 798.0h28M42 798.0h22M8 798.0h1M83 798.0h1M8 799.5h52M27 804.0h3M22 805.5h5M14 807.0h18M18 810.0h8M53 811.5h18M73 811.5h8M8 817.5h62M11 819.0h16M31 819.0h28M63 819.0h6M8 819.0h1M83 819.0h1M11 820.5h16M35 820.5h28M8 820.5h1M83 820.5h1M11 822.0h22M37 822.0h12M8 822.0h1M83 822.0h1M11 823.5h9M8 823.5h1M83 823.5h1M11 825.0h9M23 825.0h22M48 825.0h12M8 825.0h1M83 825.0h1M8 826.5h68M14 828.0h46M17 829.5h34M59 829.5h9M14 829.5h1M83 829.5h1M17 831.0h12M31 831.0h22M14 831.0h1M83 831.0h1M14 832.5h62M22 844.5h3M43 844.5h14M10 849.0h66M13 850.5h28M43 850.5h9M10 850.5h1M83 850.5h1M13 852.0h22M39 852.0h34M10 852.0h1M83 852.0h1M10 853.5h50M10 855.0h4M26 858.0h14M42 858.0h14M35 859.5h4M10 864.0h10M49 864.0h3M64 865.5h18M13 867.0h8M38 867.0h4M13 868.5h5M14 870.0h62M17 871.5h6M14 871.5h1M83 871.5h1M17 873.0h16M14 873.0h1M83 873.0h1M17 874.5h34M14 874.5h1M83 874.5h1M17 876.0h22M41 876.0h34M14 876.0h1M83 876.0h1M17 877.5h22M42 877.5h9M14 877.5h1M83 877.5h1M17 879.0h12M14 879.0h1M83 879.0h1M14 880.5h56M54 882.0h6M31 885.0h3M37 885.0h14M54 885.0h18M17 886.5h18M45 888.0h3M14 889.5h10M25 897.0h3M31 897.0h12M36 901.5h8M23 903.0h14M46 904.5h3M20 906.0h6M14 916.5h14M11 918.0h5M24 918.0h5M32 918.0h14M33 919.5h6M41 919.5h18M8 921.0h3M12 921.0h12M14 922.5h14M21 924.0h18M42 925.5h4M46 927.0h6M11 930.0h4M21 936.0h3M26 936.0h10M30 937.5h14M47 939.0h14M15 942.0h18M35 942.0h5M43 942.0h6M51 942.0h10M30 943.5h14M10 949.5h18M47 949.5h12M29 951.0h14M10 952.5h4M40 952.5h8M43 954.0h12M8 957.0h52M11 958.5h22M36 958.5h16M55 958.5h12M8 958.5h1M83 958.5h1M11 960.0h28M43 960.0h6M8 960.0h1M83 960.0h1M11 961.5h6M19 961.5h16M39 961.5h6M8 961.5h1M83 961.5h1M11 963.0h16M8 963.0h1M83 963.0h1M8 964.5h52M12 967.5h18M48 967.5h12M61 967.5h14M25 969.0h4M12 970.5h4M8 973.5h68M11 975.0h9M24 975.0h34M8 975.0h1M83 975.0h1M11 976.5h28M43 976.5h22M8 976.5h1M83 976.5h1M11 978.0h9M28 978.0h6M8 978.0h1M83 978.0h1M11 979.5h12M8 979.5h1M83 979.5h1M11 981.0h28M8 981.0h1M83 981.0h1M8 982.5h62M29 985.5h4M34 988.5h8M12 990.0h14M47 990.0h14M62 990.0h14M43 991.5h6M31 993.0h14M14 994.5h62M17 996.0h9M30 996.0h28M66 996.0h12M14 996.0h1M83 996.0h1M17 997.5h9M14 997.5h1M83 997.5h1M17 999.0h16M14 999.0h1M83 999.0h1M17 1000.5h16M36 1000.5h28M14 1000.5h1M83 1000.5h1M17 1002.0h28M47 1002.0h6M55 1002.0h12M14 1002.0h1M83 1002.0h1M14 1003.5h62M18 1006.5h8M12 1009.5h14M28 1009.5h4M42 1009.5h18M67 1011.0h8M28 1015.5h6M52 1015.5h3M18 1029.0h5M21 1030.5h12M18 1036.5h8M21 1038.0h18M18 1039.5h3M24 1039.5h3M18 1044.0h14M35 1044.0h12M49 1044.0h10M27 1047.0h4M24 1048.5h14M52 1048.5h8M18 1050.0h4M15 1053.0h4M18 1056.0h18M46 1056.0h10M38 1060.5h10M12 1065.0h5M15 1066.5h3M15 1069.5h6M24 1069.5h6M31 1069.5h3M23 1074.0h12M43 1074.0h14M12 1077.0h10M12 1078.5h5M18 1078.5h4M21 1080.0h18M42 1080.0h4M49 1080.0h18M26 1081.5h5M25 1083.0h14M12 1084.5h12M22 1086.0h14M36 1089.0h12M13 1093.5h14M29 1093.5h5M37 1093.5h18M35 1095.0h6M14 1096.5h46M17 1098.0h16M35 1098.0h16M14 1098.0h1M83 1098.0h1M17 1099.5h12M31 1099.5h9M14 1099.5h1M83 1099.5h1M17 1101.0h28M14 1101.0h1M83 1101.0h1M14 1102.5h56M60 1107.0h14M37 1108.5h18M49 1110.0h10M31 1116.0h10M42 1116.0h18M17 1117.5h12M37 1117.5h4M43 1117.5h5M41 1119.0h14M58 1120.5h3M62 1120.5h6M32 1123.5h6M40 1123.5h4M14 1125.0h14M8 1126.5h62M11 1128.0h22M41 1128.0h9M54 1128.0h6M8 1128.0h1M83 1128.0h1M11 1129.5h6M20 1129.5h12M8 1129.5h1M83 1129.5h1M11 1131.0h22M36 1131.0h28M66 1131.0h16M8 1131.0h1M83 1131.0h1M8 1132.5h52M43 1137.0h6M50 1137.0h14M48 1141.5h18M10 1147.5h66M13 1149.0h22M43 1149.0h28M10 1149.0h1M83 1149.0h1M13 1150.5h22M39 1150.5h34M10 1150.5h1M83 1150.5h1M13 1152.0h12M29 1152.0h12M45 1152.0h34M10 1152.0h1M83 1152.0h1M13 1153.5h22M10 1153.5h1M83 1153.5h1M13 1155.0h9M10 1155.0h1M83 1155.0h1M10 1156.5h66M26 1158.0h14M37 1159.5h14M34 1161.0h8M12 1162.5h18M32 1162.5h8M12 1164.0h5M41 1165.5h6M32 1167.0h18M18 1168.5h5M21 1170.0h5M27 1170.0h12M41 1170.0h6M58 1171.5h6M16 1173.0h12M14 1177.5h56M17 1179.0h9M14 1179.0h1M83 1179.0h1M17 1180.5h34M14 1180.5h1M83 1180.5h1M17 1182.0h22M47 1182.0h22M14 1182.0h1M83 1182.0h1M17 1183.5h22M47 1183.5h34M14 1183.5h1M83 1183.5h1M17 1185.0h12M31 1185.0h6M14 1185.0h1M83 1185.0h1M14 1186.5h56" stroke="#5d9445" stroke-opacity="0.5" stroke-width="0.900" stroke-dasharray="3 1 2 1 4 1 1 1" fill="none"/><path d="M62 18.0h12M14 25.5h4M19 25.5h8M39 25.5h14M33 34.5h4M18 37.5h5M26 39.0h8M66 42.0h12M30 45.0h8M17 48.0h12M22 51.0h5M30 66.0h10M43 66.0h14M18 67.5h4M18 72.0h5M18 73.5h4M24 76.5h12M25 96.0h8M56 97.5h6M44 100.5h18M12 102.0h14M12 103.5h6M39 106.5h4M18 112.5h4M45 112.5h6M53 114.0h4M18 120.0h10M21 121.5h10M18 126.0h8M36 133.5h12M14 147.0h8M18 148.5h14M27 150.0h4M21 151.5h8M20 157.5h8M30 163.5h14M14 165.0h5M41 165.0h3M18 168.0h4M22 175.5h8M8 177.0h4M8 178.5h10M21 183.0h4M21 184.5h18M53 187.5h4M18 190.5h6M21 192.0h10M28 193.5h12M29 195.0h12M45 202.5h4M26 207.0h12M14 208.5h5M25 211.5h14M26 214.5h3M14 216.0h18M15 225.0h10M29 231.0h4M77 246.0h5M28 247.5h5M21 250.5h4M27 250.5h14M32 252.0h12M21 255.0h6M36 256.5h8M25 259.5h18M33 264.0h6M53 264.0h12M15 276.0h4M22 276.0h3M33 277.5h6M8 282.0h12M8 285.0h14M16 288.0h14M24 315.0h4M42 315.0h8M52 315.0h6M13 316.5h5M26 316.5h14M17 321.0h12M23 336.0h10M41 342.0h18M12 348.0h18M58 351.0h4M36 363.0h8M49 364.5h6M30 373.5h5M15 375.0h12M11 376.5h6M50 385.5h12M13 390.0h4M36 391.5h18M19 399.0h10M39 399.0h4M34 402.0h14M20 405.0h4M42 405.0h4M26 406.5h4M58 406.5h14M26 408.0h14M46 409.5h10M17 414.0h12M17 415.5h18M11 421.5h8M19 433.5h3M18 444.0h6M26 444.0h3M50 444.0h5M15 445.5h4M20 445.5h3M52 454.5h5M23 459.0h4M30 466.5h10M32 477.0h3M16 480.0h18M56 484.5h6M10 487.5h18M52 487.5h12M51 489.0h3M30 502.5h6M33 511.5h18M23 513.0h14M40 528.0h14M19 529.5h5M18 543.0h8M65 544.5h14M53 550.5h18M26 559.5h4M22 562.5h5M29 564.0h8M24 568.5h10M35 568.5h3M15 583.5h4M40 583.5h3M18 585.0h5M22 594.0h6M39 594.0h8M38 597.0h3M11 609.0h12M25 609.0h3M31 609.0h8M8 612.0h18M51 613.5h5M14 621.0h14M35 621.0h14M36 625.5h6M27 636.0h12M41 636.0h10M59 636.0h10M47 637.5h8M23 645.0h6M21 648.0h5M34 663.0h12M13 670.5h3M40 670.5h18M10 672.0h4M17 673.5h3M16 676.5h3M38 684.0h4M14 685.5h8M21 693.0h8M15 694.5h5M40 696.0h4M12 699.0h12M27 699.0h18M18 700.5h6M27 714.0h12M41 714.0h5M42 718.5h14M18 720.0h14M44 729.0h10M57 733.5h3M14 745.5h3M14 751.5h12M57 751.5h4M14 762.0h4M30 766.5h14M40 783.0h10M51 783.0h12M34 805.5h4M41 813.0h12M18 814.5h18M38 814.5h5M21 835.5h6M29 835.5h8M12 837.0h8M43 837.0h12M57 837.0h8M58 844.5h12M12 846.0h5M10 861.0h10M10 862.5h14M10 865.5h5M44 865.5h18M62 882.0h18M47 889.5h6M23 891.0h5M36 891.0h14M30 901.5h5M34 904.5h10M10 906.0h3M11 909.0h5M53 913.5h3M18 918.0h5M61 919.5h10M30 922.5h14M14 924.0h5M76 927.0h5M8 928.5h5M15 928.5h5M26 933.0h3M12 936.0h6M37 936.0h5M12 939.0h12M10 951.0h3M44 951.0h8M15 952.5h4M23 954.0h4M21 988.5h12M43 1026.0h12M18 1032.0h6M12 1041.0h4M40 1048.5h4M46 1048.5h5M25 1050.0h3M26 1051.5h5M35 1054.5h6M10 1057.5h18M31 1057.5h3M65 1068.0h4M35 1069.5h4M59 1074.0h14M21 1075.5h3M18 1083.0h5M40 1083.0h4M38 1086.0h3M25 1087.5h14M16 1089.0h10M62 1089.0h10M57 1093.5h6M25 1095.0h8M18 1104.0h6M27 1105.5h5M37 1107.0h8M34 1111.5h12M20 1120.5h18M60 1122.0h10M29 1125.0h6M12 1137.0h14M66 1137.0h5M18 1143.0h3M24 1143.0h5M53 1159.5h8M15 1161.0h10M41 1162.5h8M18 1167.0h4M25 1167.0h4M20 1171.5h18" stroke="#a99ae0" stroke-opacity="0.42" stroke-width="0.900" stroke-dasharray="2 1 3 1" fill="none"/><path d="M14 21.0h6M17 24.0h12M21 40.5h3M26 40.5h10M41 45.0h8M29 51.0h18M39 70.5h6M56 75.0h8M12 94.5h10M12 96.0h10M41 97.5h14M59 99.0h18M30 106.5h6M27 109.5h5M22 123.0h12M36 123.0h18M18 127.5h12M28 129.0h12M41 129.0h4M49 130.5h10M62 130.5h18M21 133.5h14M18 135.0h12M32 135.0h10M14 138.0h3M17 139.5h3M38 142.5h14M14 144.0h4M20 144.0h18M43 151.5h8M14 159.0h12M37 159.0h12M25 171.0h3M8 174.0h6M16 174.0h14M20 178.5h12M21 180.0h5M18 189.0h12M68 198.0h18M51 202.5h6M30 205.5h5M39 207.0h5M47 207.0h4M17 214.5h6M11 217.5h4M10 229.5h6M34 231.0h14M13 232.5h8M19 234.0h3M10 235.5h4M21 238.5h14M36 240.0h6M28 241.5h3M34 241.5h12M26 252.0h4M53 252.0h10M18 253.5h12M31 253.5h10M17 273.0h14M28 279.0h14M25 283.5h10M17 286.5h3M8 291.0h3M31 310.5h12M20 316.5h4M33 322.5h14M54 322.5h5M26 327.0h3M40 327.0h10M12 330.0h5M25 333.0h12M15 334.5h10M40 339.0h18M51 340.5h18M36 352.5h6M44 352.5h6M36 364.5h5M15 367.5h12M24 370.5h4M19 376.5h5M36 378.0h18M17 379.5h8M15 381.0h18M45 381.0h6M11 382.5h5M41 385.5h8M14 387.0h8M10 394.5h6M19 396.0h6M39 396.0h4M30 399.0h8M10 402.0h4M27 402.0h6M64 408.0h4M59 409.5h14M37 412.5h12M37 414.0h8M45 423.0h4M10 426.0h4M10 427.5h12M57 429.0h4M19 430.5h3M18 432.0h3M12 438.0h10M30 439.5h18M12 441.0h8M20 462.0h5M28 462.0h12M21 468.0h6M21 481.5h18M39 498.0h14M12 507.0h4M21 510.0h4M27 510.0h10M18 513.0h4M10 528.0h8M20 528.0h6M18 550.5h18M45 550.5h6M24 558.0h14M21 559.5h3M20 565.5h6M17 570.0h4M27 570.0h10M17 573.0h12M14 576.0h5M46 583.5h8M14 594.0h6M14 597.0h14M14 606.0h5M34 606.0h12M11 610.5h3M16 610.5h10M45 613.5h4M11 619.5h4M30 621.0h3M53 622.5h18M14 624.0h18M34 624.0h5M48 645.0h3M13 666.0h18M18 670.5h14M45 672.0h3M19 678.0h8M77 691.5h8M30 693.0h18M21 694.5h5M47 696.0h3M56 708.0h18M18 711.0h10M35 711.0h3M41 711.0h3M18 726.0h4M12 727.5h10M25 729.0h3M21 733.5h4M45 733.5h10M44 745.5h12M48 751.5h6M49 753.0h5M29 756.0h6M23 759.0h6M23 760.5h3M20 762.0h6M21 783.0h18M30 784.5h4M15 789.0h5M8 801.0h3M32 804.0h6M18 811.5h5M26 811.5h14M42 811.5h8M21 813.0h8M15 838.5h12M29 838.5h18M15 844.5h6M10 856.5h3M41 859.5h4M47 859.5h5M31 865.5h10M23 867.0h12M44 867.0h5M19 868.5h5M28 882.0h18M23 888.0h14M30 891.0h3M17 892.5h5M28 906.0h12M42 907.5h3M22 913.5h18M17 915.0h12M47 922.5h6M35 925.5h4M54 937.5h14M26 939.0h10M21 940.5h8M11 946.5h14M8 948.0h6M17 948.0h18M15 951.0h12M16 954.0h5M32 967.5h14M19 970.5h5M42 970.5h5M50 985.5h14M23 993.0h5M12 1006.5h5M44 1011.0h5M15 1012.5h4M21 1015.5h5M18 1017.0h12M12 1018.5h6M21 1020.0h14M24 1033.5h4M37 1035.0h3M19 1041.0h5M31 1045.5h10M15 1054.5h5M37 1056.0h8M19 1059.0h18M13 1060.5h8M25 1068.0h14M15 1086.0h4M51 1089.0h8M70 1105.5h12M18 1107.0h18M48 1107.0h10M27 1110.0h12M17 1114.5h5M21 1119.0h18M17 1122.0h14M23 1123.5h8M45 1123.5h3M35 1134.0h8M67 1138.5h12M39 1143.0h3M18 1144.5h10M15 1158.0h8M42 1158.0h18M63 1159.5h12M12 1165.5h18M31 1165.5h8M12 1167.0h4M13 1174.5h10M36 1176.0h10" stroke="#7fa8c8" stroke-opacity="0.42" stroke-width="0.900" stroke-dasharray="2 1 1 1 3 1" fill="none"/><path d="M21 21.0h14M30 24.0h8M40 24.0h18M14 28.5h8M12 49.5h5M23 66.0h4M37 75.0h14M52 75.0h3M31 93.0h4M15 99.0h18M82 109.5h5M53 121.5h14M18 123.0h3M56 123.0h8M27 126.0h3M31 126.0h6M46 129.0h6M39 130.5h8M60 135.0h18M54 142.5h12M40 144.0h8M28 147.0h18M34 148.5h6M21 153.0h14M14 154.5h4M30 157.5h14M60 157.5h4M14 162.0h18M45 162.0h4M26 169.5h5M11 171.0h4M48 178.5h5M25 181.5h4M41 184.5h8M25 190.5h10M31 196.5h8M41 196.5h10M41 198.0h5M21 202.5h10M32 202.5h10M54 207.0h5M11 210.0h14M55 211.5h18M18 217.5h3M10 228.0h5M18 229.5h8M13 231.0h6M21 231.0h6M36 232.5h5M19 237.0h18M37 238.5h6M21 240.0h14M21 241.5h5M63 246.0h12M85 246.0h3M18 252.0h6M45 252.0h6M24 261.0h3M21 262.5h12M27 264.0h3M44 279.0h18M20 283.5h3M11 288.0h4M47 288.0h18M27 289.5h6M40 291.0h8M49 291.0h3M21 292.5h5M29 292.5h8M40 292.5h8M18 312.0h5M25 312.0h12M27 313.5h6M36 315.0h5M10 318.0h3M26 318.0h8M10 319.5h6M30 321.0h12M13 322.5h8M16 324.0h8M55 325.5h12M13 327.0h12M31 327.0h6M18 328.5h4M18 331.5h5M12 342.0h14M26 343.5h18M21 364.5h12M42 364.5h4M12 369.0h10M25 369.0h8M15 370.5h8M29 378.0h4M35 381.0h8M20 385.5h5M23 387.0h12M29 390.0h6M51 390.0h12M19 394.5h3M31 394.5h6M10 397.5h6M45 399.0h8M51 411.0h3M22 420.0h8M11 424.5h8M30 426.0h8M23 430.5h5M30 435.0h12M12 448.5h14M28 448.5h4M18 451.5h4M12 453.0h4M19 453.0h18M12 454.5h4M19 454.5h14M13 460.5h3M18 460.5h18M43 462.0h8M11 463.5h18M60 463.5h3M48 466.5h3M51 471.0h5M21 472.5h18M12 477.0h8M36 480.0h14M10 481.5h4M40 489.0h10M17 499.5h4M40 510.0h8M61 511.5h14M15 514.5h8M28 526.5h10M44 541.5h8M21 544.5h6M51 544.5h12M30 561.0h5M19 564.0h5M39 570.0h18M20 583.5h14M12 586.5h8M36 592.5h6M45 592.5h6M54 592.5h3M48 595.5h8M28 606.0h4M17 607.5h18M11 618.0h3M14 622.5h5M21 639.0h5M36 642.0h4M32 645.0h14M18 649.5h8M20 663.0h12M10 669.0h6M39 672.0h4M48 682.5h8M29 688.5h4M34 688.5h3M15 690.0h3M70 691.5h4M21 696.0h3M53 697.5h5M24 709.5h5M27 717.0h4M18 721.5h18M56 729.0h18M36 730.5h3M30 745.5h12M14 747.0h12M21 750.0h12M28 751.5h18M31 754.5h3M37 756.0h4M40 805.5h18M31 813.0h8M12 835.5h8M30 837.0h10M12 843.0h12M27 844.5h14M10 858.0h14M17 883.5h5M23 883.5h5M38 886.5h10M20 894.0h18M13 898.5h10M16 900.0h5M10 901.5h6M10 907.5h18M30 907.5h10M8 910.5h12M14 913.5h5M42 913.5h10M47 918.0h3M17 919.5h14M28 925.5h5M17 927.0h14M49 928.5h6M21 933.0h4M39 939.0h5M46 943.5h3M57 946.5h8M37 948.0h10M31 949.5h10M21 952.5h18M30 954.0h12M12 969.0h12M31 987.0h14M15 991.5h18M18 993.0h3M25 1008.0h8M33 1009.5h8M12 1014.0h12M38 1020.0h12M18 1027.5h6M40 1030.5h3M45 1030.5h12M58 1030.5h10M31 1032.0h4M27 1036.5h8M27 1041.0h18M25 1045.5h4M29 1050.0h5M15 1051.5h10M22 1054.5h12M50 1060.5h4M20 1065.0h5M12 1068.0h12M41 1068.0h12M26 1084.5h4M36 1084.5h3M21 1087.5h3M19 1095.0h3M77 1107.0h3M18 1111.5h14M23 1116.0h5M33 1122.0h5M40 1122.0h18M18 1138.5h4M50 1138.5h14M15 1140.0h8M35 1141.5h10M32 1143.0h5M62 1158.0h4M28 1161.0h3M43 1161.0h8M25 1174.5h10" stroke="#57b394" stroke-opacity="0.42" stroke-width="0.900" stroke-dasharray="3 1 2 1" fill="none"/><path d="M10 2.500h80M8 6h82M22 11h50M28 14.500h46" stroke="#5d9445" stroke-opacity="0.7" stroke-width="2.200" stroke-dasharray="7 1 9 1 5 1" fill="none"/></svg><div class="b" style="left:1232px;top:184px;width:8px;height:1191px;background:linear-gradient(90deg,#00000000,#00000050);"></div><div class="b" style="left:1332px;top:184px;width:1px;height:1191px;background:#2b2b2b;"></div><div class="b" style="left:1240px;top:1186px;width:92px;height:6px;background:#3a3a2c;"></div><div class="b" style="left:1332px;top:1186px;width:28px;height:7px;background:#7f7f48;"></div><div class="b" style="left:825px;top:140px;width:384px;height:52px;background:#333333;border-radius:9px;box-shadow:0 2px 8px #00000088;"></div><svg class="b" style="left:840px;top:146px;" width="365" height="40" viewBox="0 0 365 40"><g fill="#8a8a8a"><rect x="9" y="10" width="4.500" height="4.500"/><rect x="9" y="18" width="4.500" height="4.500"/><rect x="9" y="26" width="4.500" height="4.500"/><rect x="17" y="10" width="4.500" height="4.500"/><rect x="17" y="18" width="4.500" height="4.500"/><rect x="17" y="26" width="4.500" height="4.500"/></g><g fill="none" stroke="#75beff" stroke-width="2.600" stroke-linejoin="round" stroke-linecap="round"><path d="M42.500 8.500v23" stroke-linecap="butt"/><path d="M50 9.500l15 10.500-15 10.500z"/><path d="M94 19a11.500 11.500 0 0 1 21.500-3"/><path d="M116.500 8v9h-9" stroke-linejoin="miter"/><path d="M157.500 7v17M149.500 16.500l8 8 8-8"/><path d="M209 23V8M201 15.500l8-8 8 8"/></g><g fill="#75beff"><circle cx="104" cy="28.500" r="4.200"/><circle cx="157.500" cy="30.500" r="4.200"/><circle cx="209" cy="30" r="4.200"/></g><g fill="none" stroke="#89d185" stroke-width="3" stroke-linecap="round"><path d="M252.500 13.500a10.500 10.500 0 1 1-2.500 7"/><path d="M250.500 8v6.500h6.500" stroke-linejoin="miter"/></g><rect x="301.500" y="9" width="22" height="22" rx="2" fill="none" stroke="#f48771" stroke-width="2.600"/><path d="M338 17l7 7 7-7" fill="none" stroke="#c5c5c5" stroke-width="2"/></svg><span class="t" style="left:1401.0px;top:89.5px;line-height:31px;font-size:22px;color:#bbbbbb;letter-spacing:-0.027px;">RUN AND DEBUG</span><div class="b" style="left:1710px;top:82px;width:398px;height:46px;background:#3c3c3c;border-radius:6px;"></div><svg class="b" style="left:1720px;top:90px;" width="28" height="30" viewBox="0 0 28 30"><path d="M5 4.500l17 10.500-17 10.500z" fill="none" stroke="#89d185" stroke-width="2.600" stroke-linejoin="round"/></svg><span class="t" style="left:1767.0px;top:89.0px;line-height:32px;font-size:23px;color:#f0f0f0;letter-spacing:-0.181px;">IVAS MC Decode</span><svg class="b" style="left:2064px;top:95px;" width="28" height="22" viewBox="0 0 28 22"><path d="M4 6l10 10 10-10" fill="none" stroke="#cccccc" stroke-width="2"/></svg><svg class="b" style="left:2121.8px;top:88.8px;" width="32.4" height="32.4" viewBox="0 0 32.4 32.4"><g transform="translate(16.2 16.2) rotate(0)"><g fill="none" stroke="#d0d0d0" stroke-width="2" stroke-linejoin="round"><path d="M9.17 -2.86L13.02 -2.17L13.02 2.17L9.17 2.86L8.50 4.46L10.74 7.67L7.67 10.74L4.46 8.50L2.86 9.17L2.17 13.02L-2.17 13.02L-2.86 9.17L-4.46 8.50L-7.67 10.74L-10.74 7.67L-8.50 4.46L-9.17 2.86L-13.02 2.17L-13.02 -2.17L-9.17 -2.86L-8.50 -4.46L-10.74 -7.67L-7.67 -10.74L-4.46 -8.50L-2.86 -9.17L-2.17 -13.02L2.17 -13.02L2.86 -9.17L4.46 -8.50L7.67 -10.74L10.74 -7.67L8.50 -4.46z"/><circle cx="0" cy="0" r="3.2"/></g></g></svg><svg class="b" style="left:2174px;top:99px;" width="34" height="12" viewBox="0 0 34 12"><g fill="#cccccc"><circle cx="6" cy="6" r="2.200"/><circle cx="16" cy="6" r="2.200"/><circle cx="26.100" cy="6" r="2.200"/></g></svg><svg class="b" style="left:1368px;top:154px;" width="24" height="16" viewBox="0 0 24 16"><path d="M3 3l9 9 9-9" fill="none" stroke="#cccccc" stroke-width="2"/></svg><span class="t" style="left:1401.0px;top:146.5px;line-height:31px;font-size:22px;color:#d2d2d2;font-weight:bold;letter-spacing:0.057px;">VARIABLES</span><svg class="b" style="left:2194.5px;top:149px;" width="28" height="28" viewBox="0 0 28 28"><g fill="none" stroke="#cccccc" stroke-width="2" stroke-linejoin="round"><rect x="2.500" y="8.500" width="16" height="16" rx="2.500"/><path d="M9 8.500V5a2.500 2.500 0 0 1 2.500-2.500h11A2.500 2.500 0 0 1 25 5v11a2.500 2.500 0 0 1-2.500 2.500H19M6.500 16.500h8"/></g></svg><svg class="b" style="left:1386px;top:198px;" width="24" height="16" viewBox="0 0 24 16"><path d="M3 3l9 9 9-9" fill="none" stroke="#cccccc" stroke-width="2"/></svg><span class="t" style="left:1421.0px;top:191.0px;line-height:32px;font-size:23px;color:#d6d6d6;font-weight:bold;letter-spacing:-0.415px;">Local</span><span class="t" style="left:1436.0px;top:235.5px;line-height:31px;font-size:22px;color:#ccc;font-family:'Liberation Mono',monospace;"><span style="color:#c48cc4">var1</span><span style="color:#b0b0b0"> = </span><span style="color:#b5cea8">8725</span></span><span class="t" style="left:1436.0px;top:279.5px;line-height:31px;font-size:22px;color:#ccc;font-family:'Liberation Mono',monospace;"><span style="color:#c48cc4">var2</span><span style="color:#b0b0b0"> = </span><span style="color:#b5cea8">0</span></span><span class="t" style="left:1436.0px;top:323.5px;line-height:31px;font-size:22px;color:#ccc;font-family:'Liberation Mono',monospace;"><span style="color:#c48cc4">var_out</span><span style="color:#b0b0b0"> = </span><span style="color:#b5cea8">0</span></span><span class="t" style="left:1436.0px;top:367.5px;line-height:31px;font-size:22px;color:#ccc;font-family:'Liberation Mono',monospace;"><span style="color:#c48cc4">iteration</span><span style="color:#b0b0b0"> = </span><span style="color:#b5cea8">9</span></span><span class="t" style="left:1436.0px;top:411.5px;line-height:31px;font-size:22px;color:#ccc;font-family:'Liberation Mono',monospace;"><span style="color:#c48cc4">L_num</span><span style="color:#b0b0b0"> = </span><span style="color:#b5cea8">15030</span></span><span class="t" style="left:1436.0px;top:455.5px;line-height:31px;font-size:22px;color:#ccc;font-family:'Liberation Mono',monospace;"><span style="color:#c48cc4">L_denom</span><span style="color:#b0b0b0"> = </span><span style="color:#b5cea8">1</span></span><svg class="b" style="left:1407px;top:502px;" width="16" height="24" viewBox="0 0 16 24"><path d="M3.500 3l9 9-9 9" fill="none" stroke="#cccccc" stroke-width="2"/></svg><span class="t" style="left:1436.0px;top:499.5px;line-height:31px;font-size:22px;color:#ccc;font-family:'Liberation Mono',monospace;"><span style="color:#c48cc4">text</span><span style="color:#b0b0b0"> = </span><span style="color:#d19a7f">&quot;Division Error var1=8725  var2=0 in \0;\xdco\U00000…</span></span><svg class="b" style="left:1389px;top:546px;" width="16" height="24" viewBox="0 0 16 24"><path d="M3.500 3l9 9-9 9" fill="none" stroke="#cccccc" stroke-width="2"/></svg><span class="t" style="left:1421.0px;top:543.0px;line-height:32px;font-size:23px;color:#d6d6d6;font-weight:bold;letter-spacing:0.394px;">Static</span><svg class="b" style="left:1389px;top:590px;" width="16" height="24" viewBox="0 0 16 24"><path d="M3.500 3l9 9-9 9" fill="none" stroke="#cccccc" stroke-width="2"/></svg><span class="t" style="left:1421.0px;top:587.0px;line-height:32px;font-size:23px;color:#d6d6d6;font-weight:bold;letter-spacing:-0.261px;">Global</span><div class="b" style="left:1360px;top:624px;width:876px;height:44px;background:transparent;border:2px solid #3b7fd0;box-sizing:border-box;"></div><svg class="b" style="left:1389px;top:634px;" width="16" height="24" viewBox="0 0 16 24"><path d="M3.500 3l9 9-9 9" fill="none" stroke="#cccccc" stroke-width="2"/></svg><span class="t" style="left:1421.0px;top:631.0px;line-height:32px;font-size:23px;color:#d6d6d6;font-weight:bold;letter-spacing:0.019px;">Registers</span><div class="b" style="left:1360px;top:768px;width:876px;height:2px;background:#454547;"></div><svg class="b" style="left:1368px;top:783px;" width="24" height="16" viewBox="0 0 24 16"><path d="M3 3l9 9 9-9" fill="none" stroke="#cccccc" stroke-width="2"/></svg><span class="t" style="left:1401.0px;top:775.5px;line-height:31px;font-size:22px;color:#d2d2d2;font-weight:bold;letter-spacing:0.049px;">CALL STACK</span><div class="b" style="left:2015px;top:779px;width:153px;height:25px;background:#782b2b;border-radius:5px;"></div><span class="t" style="left:2020.0px;top:777.5px;line-height:27px;font-size:19px;color:#f2e4e4;font-weight:bold;letter-spacing:-0.192px;">signal SIGABRT</span><svg class="b" style="left:2194.5px;top:778px;" width="28" height="28" viewBox="0 0 28 28"><g fill="none" stroke="#cccccc" stroke-width="2" stroke-linejoin="round"><rect x="2.500" y="8.500" width="16" height="16" rx="2.500"/><path d="M9 8.500V5a2.500 2.500 0 0 1 2.500-2.500h11A2.500 2.500 0 0 1 25 5v11a2.500 2.500 0 0 1-2.500 2.500H19M6.500 16.500h8"/></g></svg><div class="b" style="left:1360px;top:812px;width:876px;height:584px;overflow:hidden"><div class="b" style="left:-1360px;top:-812px;width:2332px;height:1572px"><span class="t" style="left:1663.0px;top:810.0px;line-height:38px;font-size:27px;color:#4172b4;letter-spacing:-0.129px;">Show 3 More Stack Frames</span><div class="b" style="left:1360px;top:844px;width:876px;height:44px;background:#37373d;"></div><div class="b" style="left:1360px;top:1152px;width:876px;height:44px;background:#2a2d2e;"></div><span class="t" style="left:1421.0px;top:851.5px;line-height:31px;font-size:22px;color:#d6d6d6;font-family:'Liberation Mono',monospace;letter-spacing:-0.050px;">div_s</span><div class="b" style="left:2124.8px;top:851px;width:89.19999999999999px;height:35.7px;background:#4a4a4c;border-radius:18px;"></div><span class="t" style="left:2133.5px;top:853.1px;line-height:29px;font-size:20.8px;color:#f0f0f0;letter-spacing:1.446px;">3481:9</span><span class="t" style="left:1978.3px;top:849.5px;line-height:36px;font-size:26px;color:#d8d8d8;letter-spacing:0.800px;">basop32.c</span><span class="t" style="left:1421.0px;top:895.5px;line-height:31px;font-size:22px;color:#cccccc;font-family:'Liberation Mono',monospace;letter-spacing:-0.050px;">BASOP_Util_Divide3216_Scale</span><div class="b" style="left:2124.8px;top:895px;width:89.19999999999999px;height:35.7px;background:#4a4a4c;border-radius:18px;"></div><span class="t" style="left:2133.5px;top:897.1px;line-height:29px;font-size:20.8px;color:#c4c4c4;letter-spacing:1.446px;">1956:9</span><span class="t" style="left:1958.4px;top:893.5px;line-height:36px;font-size:26px;color:#9a9a9a;letter-spacing:0.694px;">basop_util.c</span><span class="t" style="left:1421.0px;top:939.5px;line-height:31px;font-size:22px;color:#cccccc;font-family:'Liberation Mono',monospace;letter-spacing:-0.050px;">BASOP_Util_Divide3232_Scale</span><div class="b" style="left:2124.8px;top:939px;width:89.19999999999999px;height:35.7px;background:#4a4a4c;border-radius:18px;"></div><span class="t" style="left:2133.5px;top:941.1px;line-height:29px;font-size:20.8px;color:#c4c4c4;letter-spacing:1.446px;">1068:9</span><span class="t" style="left:1958.4px;top:937.5px;line-height:36px;font-size:26px;color:#9a9a9a;letter-spacing:0.694px;">basop_util.c</span><span class="t" style="left:1421.0px;top:983.5px;line-height:31px;font-size:22px;color:#cccccc;font-family:'Liberation Mono',monospace;letter-spacing:-0.050px;">decoder_tcx_noisefilling_fx</span><div class="b" style="left:2111.74px;top:983px;width:102.25999999999999px;height:35.7px;background:#4a4a4c;border-radius:18px;"></div><span class="t" style="left:2120.4px;top:985.1px;line-height:29px;font-size:20.8px;color:#c4c4c4;letter-spacing:1.453px;">4761:28</span><span class="t" style="left:1939.3px;top:981.5px;line-height:36px;font-size:26px;color:#9a9a9a;letter-spacing:0.723px;">dec_tcx_fx.c</span><span class="t" style="left:1421.0px;top:1027.5px;line-height:31px;font-size:22px;color:#cccccc;font-family:'Liberation Mono',monospace;letter-spacing:-0.050px;">ivas_mdct_core_invQ_fx</span><div class="b" style="left:2111.74px;top:1027px;width:102.25999999999999px;height:35.7px;background:#4a4a4c;border-radius:18px;"></div><span class="t" style="left:2120.4px;top:1029.1px;line-height:29px;font-size:20.8px;color:#c4c4c4;letter-spacing:1.453px;">1456:17</span><span class="t" style="left:1818.2px;top:1025.5px;line-height:36px;font-size:26px;color:#9a9a9a;letter-spacing:0.776px;">ivas_mdct_core_dec.c</span><span class="t" style="left:1421.0px;top:1071.5px;line-height:31px;font-size:22px;color:#cccccc;font-family:'Liberation Mono',monospace;letter-spacing:-0.050px;">stereo_mdct_core_dec_fx</span><span class="t" style="left:1792.1px;top:1069.5px;line-height:36px;font-size:26px;color:#9a9a9a;letter-spacing:0.760px;">ivas_stereo_mdct_core_dec_fx.c</span><span class="t" style="left:1421.0px;top:1115.5px;line-height:31px;font-size:22px;color:#cccccc;font-family:'Liberation Mono',monospace;letter-spacing:-0.050px;">ivas_core_dec_fx</span><div class="b" style="left:2124.8px;top:1115px;width:89.19999999999999px;height:35.7px;background:#4a4a4c;border-radius:18px;"></div><span class="t" style="left:2133.5px;top:1117.1px;line-height:29px;font-size:20.8px;color:#c4c4c4;letter-spacing:1.446px;">779:17</span><span class="t" style="left:1906.4px;top:1113.5px;line-height:36px;font-size:26px;color:#9a9a9a;letter-spacing:0.751px;">ivas_core_dec.c</span><span class="t" style="left:1421.0px;top:1159.5px;line-height:31px;font-size:22px;color:#cccccc;font-family:'Liberation Mono',monospace;letter-spacing:-0.050px;">ivas_cpe_dec_fx</span><div class="b" style="left:2126.86px;top:1159px;width:76.14px;height:35.7px;background:#4a4a4c;border-radius:18px;"></div><span class="t" style="left:2135.6px;top:1161.1px;line-height:29px;font-size:20.8px;color:#c4c4c4;letter-spacing:1.437px;">597:9</span><span class="t" style="left:1880.8px;top:1157.5px;line-height:36px;font-size:26px;color:#9a9a9a;letter-spacing:0.755px;">ivas_cpe_dec_fx.c</span><span class="t" style="left:1421.0px;top:1203.5px;line-height:31px;font-size:22px;color:#cccccc;font-family:'Liberation Mono',monospace;letter-spacing:-0.050px;">ivas_dec_fx</span><div class="b" style="left:2111.74px;top:1203px;width:102.25999999999999px;height:35.7px;background:#4a4a4c;border-radius:18px;"></div><span class="t" style="left:2120.4px;top:1205.1px;line-height:29px;font-size:20.8px;color:#c4c4c4;letter-spacing:1.453px;">1286:17</span><span class="t" style="left:1902.5px;top:1201.5px;line-height:36px;font-size:26px;color:#9a9a9a;letter-spacing:0.768px;">ivas_jbm_dec.c</span><span class="t" style="left:1421.0px;top:1247.5px;line-height:31px;font-size:22px;color:#cccccc;font-family:'Liberation Mono',monospace;letter-spacing:-0.050px;">IVAS_DEC_GetTcSamples</span><div class="b" style="left:2124.8px;top:1247px;width:89.19999999999999px;height:35.7px;background:#4a4a4c;border-radius:18px;"></div><span class="t" style="left:2133.5px;top:1249.1px;line-height:29px;font-size:20.8px;color:#c4c4c4;letter-spacing:1.446px;">1440:9</span><span class="t" style="left:1960.0px;top:1245.5px;line-height:36px;font-size:26px;color:#9a9a9a;letter-spacing:0.686px;">lib_dec_fx.c</span><span class="t" style="left:1421.0px;top:1291.5px;line-height:31px;font-size:22px;color:#cccccc;font-family:'Liberation Mono',monospace;letter-spacing:-0.050px;">IVAS_DEC_GetSamples</span><div class="b" style="left:2124.8px;top:1291px;width:89.19999999999999px;height:35.7px;background:#4a4a4c;border-radius:18px;"></div><span class="t" style="left:2133.5px;top:1293.1px;line-height:29px;font-size:20.8px;color:#c4c4c4;letter-spacing:1.446px;">1076:9</span><span class="t" style="left:1960.0px;top:1289.5px;line-height:36px;font-size:26px;color:#9a9a9a;letter-spacing:0.686px;">lib_dec_fx.c</span><span class="t" style="left:1421.0px;top:1335.5px;line-height:31px;font-size:22px;color:#cccccc;font-family:'Liberation Mono',monospace;letter-spacing:-0.050px;">decodeG192</span><div class="b" style="left:2111.74px;top:1335px;width:102.25999999999999px;height:35.7px;background:#4a4a4c;border-radius:18px;"></div><span class="t" style="left:2120.4px;top:1337.1px;line-height:29px;font-size:20.8px;color:#c4c4c4;letter-spacing:1.453px;">1723:28</span><span class="t" style="left:1972.9px;top:1333.5px;line-height:36px;font-size:26px;color:#9a9a9a;letter-spacing:0.752px;">decoder.c</span><span class="t" style="left:1421.0px;top:1379.5px;line-height:31px;font-size:22px;color:#cccccc;font-family:'Liberation Mono',monospace;letter-spacing:-0.050px;">main</span><div class="b" style="left:2124.8px;top:1379px;width:89.19999999999999px;height:35.7px;background:#4a4a4c;border-radius:18px;"></div><span class="t" style="left:2133.5px;top:1381.1px;line-height:29px;font-size:20.8px;color:#c4c4c4;letter-spacing:1.446px;">604:17</span><span class="t" style="left:1986.0px;top:1377.5px;line-height:36px;font-size:26px;color:#9a9a9a;letter-spacing:0.752px;">decoder.c</span></div></div><div class="b" style="left:2216px;top:812px;width:20px;height:526px;background:rgba(121,121,121,0.4);"></div><div class="b" style="left:1469px;top:1197px;width:524px;height:48px;background:#252526;border:2px solid #454545;box-sizing:border-box;border-radius:6px;box-shadow:0 3px 10px #00000066;"></div><span class="t" style="left:1486.0px;top:1205.0px;line-height:34px;font-size:24.5px;color:#cccccc;letter-spacing:0.570px;">~/git/ivas-basop/lib_dec/ivas_cpe_dec_fx.c</span><div class="b" style="left:1360px;top:1396px;width:876px;height:2px;background:#454547;"></div><div class="b" style="left:1360px;top:1398px;width:876px;height:42px;background:#252526;"></div><svg class="b" style="left:1372px;top:1407px;" width="16" height="24" viewBox="0 0 16 24"><path d="M3.500 3l9 9-9 9" fill="none" stroke="#cccccc" stroke-width="2"/></svg><span class="t" style="left:1401.0px;top:1403.5px;line-height:31px;font-size:22px;color:#d2d2d2;font-weight:bold;letter-spacing:0.080px;">BREAKPOINTS</span><div class="b" style="left:1360px;top:1440px;width:876px;height:2px;background:#454547;"></div><div class="b" style="left:1360px;top:1442px;width:876px;height:42px;background:#252526;"></div><svg class="b" style="left:1372px;top:1451px;" width="16" height="24" viewBox="0 0 16 24"><path d="M3.500 3l9 9-9 9" fill="none" stroke="#cccccc" stroke-width="2"/></svg><span class="t" style="left:1401.0px;top:1447.5px;line-height:31px;font-size:22px;color:#d2d2d2;font-weight:bold;letter-spacing:0.143px;">MODULES</span><div class="b" style="left:1360px;top:1484px;width:876px;height:2px;background:#454547;"></div><div class="b" style="left:1360px;top:1486px;width:876px;height:42px;background:#252526;"></div><svg class="b" style="left:1372px;top:1495px;" width="16" height="24" viewBox="0 0 16 24"><path d="M3.500 3l9 9-9 9" fill="none" stroke="#cccccc" stroke-width="2"/></svg><span class="t" style="left:1401.0px;top:1491.5px;line-height:31px;font-size:22px;color:#d2d2d2;font-weight:bold;letter-spacing:-0.063px;">EXCLUDED CALLERS</span><svg class="b" style="left:2252px;top:84px;" width="64" height="64" viewBox="0 0 64 64"><g fill="none" stroke="#878787" stroke-width="2.9" stroke-linejoin="round" stroke-linecap="round"><path d="M26 11.300h15.500l9.100 9.200v21.600a2.500 2.500 0 0 1-2.500 2.500H26a2.500 2.500 0 0 1-2.500-2.500v-28.300a2.500 2.500 0 0 1 2.500-2.500z"/><path d="M40.700 11.800v9.200h9.400" stroke-linecap="butt"/><path d="M23 23.400h-9a2.500 2.500 0 0 0-2.500 2.500v28.200a2.500 2.500 0 0 0 2.500 2.500h22.200a2.500 2.500 0 0 0 2.500-2.500v-9.200" stroke-linecap="butt"/></g></svg><svg class="b" style="left:2252px;top:180px;" width="64" height="64" viewBox="0 0 64 64"><g fill="none" stroke="#878787" stroke-width="3.0" stroke-linejoin="round" stroke-linecap="round"><circle cx="38.600" cy="26.500" r="15.200"/><path d="M28.500 37.800L11.500 56.300" stroke-linecap="butt"/></g></svg><svg class="b" style="left:2252px;top:276px;" width="64" height="64" viewBox="0 0 64 64"><g fill="none" stroke="#878787" stroke-width="2.9" stroke-linejoin="round" stroke-linecap="round"><circle cx="21.400" cy="17.400" r="6"/><circle cx="21.200" cy="50.700" r="6"/><circle cx="42.400" cy="26.500" r="6"/><path d="M21.400 23.400v21.300M42.400 32.500c0 9-21 5-21 12"/></g></svg><div class="b" style="left:2275px;top:310px;width:41px;height:32px;background:#3a7fd5;border-radius:16px;"></div><span class="t" style="left:2284.5px;top:313.5px;line-height:25px;font-size:18px;color:#ffffff;font-weight:bold;letter-spacing:1.739px;">43</span><svg class="b" style="left:2252px;top:372px;" width="64" height="64" viewBox="0 0 64 64"><g fill="none" stroke="#878787" stroke-width="3.0" stroke-linejoin="round" stroke-linecap="round"><path d="M39 15.400a14.300 14.300 0 1 0-8.500 28" /><path d="M26.100 41.700L12.100 52.500" stroke-linecap="butt"/><circle cx="42.400" cy="39.800" r="9.300"/><path d="M42.400 10v20.500M42.400 49.400v8.200" stroke-linecap="butt"/><path d="M48 22.500c1.600 2.400 2.600 5 2.800 8" stroke-width="1.800"/></g></svg><svg class="b" style="left:2252px;top:468px;" width="64" height="64" viewBox="0 0 64 64"><g fill="none" stroke="#878787" stroke-width="3.0" stroke-linejoin="round" stroke-linecap="round"><path d="M10.100 13.400h43.800M10.100 21.400h22M32.100 29.400h21.800M10.100 37.400h43.800M10.100 45.400h22M10.100 53.400h43.800" stroke-linecap="butt" stroke-width="3"/></g></svg><svg class="b" style="left:2252px;top:564px;" width="64" height="64" viewBox="0 0 64 64"><g fill="none" stroke="#878787" stroke-width="3.1" stroke-linejoin="round" stroke-linecap="round"><path d="M38.500 11L55 24.500 38.500 38v-7.800C27 29.500 17 33 10.500 41.500 11.500 28 22 18.500 38.500 18.500z" stroke-linejoin="round"/><circle cx="28" cy="49" r="8"/></g></svg><svg class="b" style="left:2252px;top:660px;" width="64" height="64" viewBox="0 0 64 64"><g fill="none" stroke="#ffffff" stroke-width="3.2" stroke-linejoin="round" stroke-linecap="round"><path d="M24.600 31.500V11l30 19.400-5 2.600" stroke-linejoin="miter" stroke-linecap="butt"/><g stroke-width="2.800"><ellipse cx="20.100" cy="46.700" rx="5.800" ry="10"/><path d="M14.700 42.500l-5.500-4M25.500 42.500l5.500-4M14.500 47.500H8M25.700 47.500h6.500M14.700 52.500l-5.500 4M25.500 52.500l5.500 4M15.500 41.500h9.200" stroke-linecap="butt"/></g></g></svg><div class="b" style="left:2284px;top:693.5px;width:32px;height:32px;background:#3a7fd5;border-radius:16px;"></div><span class="t" style="left:2295.0px;top:696.5px;line-height:27px;font-size:19px;color:#ffffff;">1</span><div class="b" style="left:2328px;top:646px;width:4px;height:96px;background:#ffffff;"></div><svg class="b" style="left:2252px;top:756px;" width="64" height="64" viewBox="0 0 64 64"><g fill="none" stroke="#878787" stroke-width="3.1" stroke-linejoin="round" stroke-linecap="round"><path d="M51.700 32V17.600a2 2 0 0 0-2-2H12.600a2 2 0 0 0-2 2V45a2 2 0 0 0 2 2h16" stroke-linecap="butt"/><path d="M18.400 53.400h12.200" stroke-linecap="butt"/><circle cx="43.600" cy="45.400" r="11.100"/><path d="M38.300 44l4 3.300-4 3.300M49.800 41.300l-4 3.300 4 3.300" stroke-width="1.900" stroke-linecap="butt" stroke-linejoin="miter"/></g></svg><svg class="b" style="left:2252px;top:852px;" width="64" height="64" viewBox="0 0 64 64"><g fill="none" stroke="#878787" stroke-width="3.1" stroke-linejoin="round" stroke-linecap="round"><path d="M12.100 20.400h12.800a2.500 2.500 0 0 1 2.500 2.500v15.700H43a2.500 2.500 0 0 1 2.500 2.500V54a2.500 2.500 0 0 1-2.500 2.500H12.100a2.500 2.500 0 0 1-2.500-2.500V22.900a2.500 2.500 0 0 1 2.500-2.500zM9.600 38.600h17.800M27.400 38.600v17.900"/><rect x="36.600" y="11.500" width="17.900" height="17.800" rx="3"/></g></svg><svg class="b" style="left:2252px;top:948px;" width="64" height="64" viewBox="0 0 64 64"><g fill="none" stroke="#878787" stroke-width="3.1" stroke-linejoin="round" stroke-linecap="round"><path d="M22.900 14.400h18.100" stroke-linecap="butt"/><path d="M27.400 14.400v14.300L15.400 50.500a1.600 1.600 0 0 0 1.400 2.400h30.600a1.600 1.600 0 0 0 1.400-2.400L36.500 28.700V14.400M21.600 41.400h21.100" stroke-linecap="butt"/></g></svg><svg class="b" style="left:2252px;top:1044px;" width="64" height="64" viewBox="0 0 64 64"><g fill="none" stroke="#878787" stroke-width="3.1" stroke-linejoin="round" stroke-linecap="round"><path d="M16.900 12.500l5.600 14.500h19.500l5.500-14.500 6.800 17.500c1.200 3.200.400 5.500-2 7.300L32.100 55.500 12 37.300c-2.400-1.800-3.200-4.100-2-7.300z" stroke-linejoin="round"/></g></svg><svg class="b" style="left:2252px;top:1140px;" width="64" height="64" viewBox="0 0 64 64"><g fill="none" stroke="#878787" stroke-width="2.7" stroke-linejoin="round" stroke-linecap="round"><path d="M28.300 44.800l-2.200 11.900h12.100l-2.200-11.900c4.500 1 8-1 9-4 4.800-.700 8-3.800 7.800-8.200-.200-3.300-2-5.500-4.600-6.300.700-5-2.500-8.800-7.200-8.800-1.500-3.500-4.700-5.900-8.900-5.900s-7.400 2.400-8.900 5.900c-4.700 0-7.900 3.800-7.200 8.800-2.600.800-4.400 3-4.600 6.300-.200 4.400 3 7.500 7.800 8.200 1 3 4.500 5 9.100 4z"/><path d="M22 29.900l6.600 6.400 12.200-12.200" stroke-linecap="butt" stroke-linejoin="miter"/></g></svg><svg class="b" style="left:2252px;top:1352px;" width="64" height="64" viewBox="0 0 64 64"><g fill="none" stroke="#878787" stroke-width="3"><circle cx="32.100" cy="32" r="22.500"/><circle cx="32.100" cy="27.700" r="9.700"/><path d="M17.500 48.500c2.500-7.500 8-11 14.600-11s12.100 3.500 14.600 11"/></g></svg><svg class="b" style="left:2252px;top:1448px;" width="64" height="64" viewBox="0 0 64 64"><g transform="translate(31.800 31.900)"><g fill="none" stroke="#878787" stroke-width="3.100" stroke-linejoin="miter"><path d="M15.75 -4.91L22.19 -3.69L22.19 3.69L15.75 4.91L14.61 7.67L18.31 13.08L13.08 18.31L7.67 14.61L4.91 15.75L3.69 22.19L-3.69 22.19L-4.91 15.75L-7.67 14.61L-13.08 18.31L-18.31 13.08L-14.61 7.67L-15.75 4.91L-22.19 3.69L-22.19 -3.69L-15.75 -4.91L-14.61 -7.67L-18.31 -13.08L-13.08 -18.31L-7.67 -14.61L-4.91 -15.75L-3.69 -22.19L3.69 -22.19L4.91 -15.75L7.67 -14.61L13.08 -18.31L18.31 -13.08L14.61 -7.67z"/><circle r="5.400"/></g></g></svg><div class="b" style="left:2284.2px;top:1479.8px;width:32px;height:32px;background:#3a7fd5;border-radius:16px;"></div><svg class="b" style="left:2284.2px;top:1479.8px;" width="32" height="32" viewBox="0 0 32 32"><circle cx="16" cy="16" r="12.600" fill="none" stroke="#fff" stroke-width="2.600"/><path d="M15.600 8.500v7.800l6.300 3.800" fill="none" stroke="#fff" stroke-width="2.600" stroke-linecap="round"/></svg><div class="b" style="left:0px;top:1375px;width:1360px;height:153px;background:#1e1e1e;"></div><div class="b" style="left:0px;top:1374px;width:1360px;height:2px;background:#3c3c3c;"></div><span class="t" style="left:41.0px;top:1395.5px;line-height:31px;font-size:22px;color:#989898;letter-spacing:-0.532px;">PROBLEMS</span><div class="b" style="left:180px;top:1393px;width:36px;height:36px;background:#4d4d4d;border-radius:18px;"></div><span class="t" style="left:192.0px;top:1395.5px;line-height:31px;font-size:22px;color:#ffffff;">1</span><span class="t" style="left:260.5px;top:1395.5px;line-height:31px;font-size:22px;color:#989898;letter-spacing:0.010px;">OUTPUT</span><span class="t" style="left:401.0px;top:1395.5px;line-height:31px;font-size:22px;color:#989898;letter-spacing:-0.302px;">DEBUG CONSOLE</span><span class="t" style="left:638.5px;top:1395.5px;line-height:31px;font-size:22px;color:#e7e7e7;letter-spacing:-0.141px;">WATCH</span><div class="b" style="left:633px;top:1432px;width:88px;height:2px;background:#e7e7e7;"></div><span class="t" style="left:765.0px;top:1395.5px;line-height:31px;font-size:22px;color:#989898;letter-spacing:-0.154px;">TERMINAL</span><svg class="b" style="left:910px;top:1405px;" width="32" height="12" viewBox="0 0 32 12"><g fill="#c5c5c5"><circle cx="6" cy="6" r="2.300"/><circle cx="16" cy="6" r="2.300"/><circle cx="26" cy="6" r="2.300"/></g></svg><svg class="b" style="left:1088px;top:1394px;" width="34" height="34" viewBox="0 0 34 34"><path d="M17 4v26M4 17h26" stroke="#d0d0d0" stroke-width="2" fill="none"/></svg><svg class="b" style="left:1144px;top:1397px;" width="28" height="28" viewBox="0 0 28 28"><g fill="none" stroke="#cccccc" stroke-width="2" stroke-linejoin="round"><rect x="2.500" y="8.500" width="16" height="16" rx="2.500"/><path d="M9 8.500V5a2.500 2.500 0 0 1 2.500-2.500h11A2.500 2.500 0 0 1 25 5v11a2.500 2.500 0 0 1-2.500 2.500H19M7 13l7 7M14 13l-7 7"/></g></svg><svg class="b" style="left:1196px;top:1397px;" width="28" height="28" viewBox="0 0 28 28"><g fill="none" stroke="#cccccc" stroke-width="2" stroke-linejoin="round"><rect x="2.500" y="8.500" width="16" height="16" rx="2.500"/><path d="M9 8.500V5a2.500 2.500 0 0 1 2.500-2.500h11A2.500 2.500 0 0 1 25 5v11a2.500 2.500 0 0 1-2.500 2.500H19M6.500 16.500h8"/></g></svg><svg class="b" style="left:1250px;top:1399px;" width="24" height="18" viewBox="0 0 24 18"><path d="M3 14l9-9 9 9" fill="none" stroke="#cccccc" stroke-width="2"/></svg><svg class="b" style="left:1302px;top:1399px;" width="24" height="24" viewBox="0 0 24 24"><path d="M3.500 3.500l17 17M20.500 3.500l-17 17" fill="none" stroke="#cccccc" stroke-width="2"/></svg><span class="t" style="left:61.0px;top:1451.5px;line-height:31px;font-size:22px;color:#ccc;font-family:'Liberation Mono',monospace;"><span style="color:#c48cc4">frame</span><span style="color:#b0b0b0"> = </span><span style="color:#b5cea8">708</span></span><svg class="b" style="left:20px;top:1535px;" width="32" height="30" viewBox="0 0 32 30"><path d="M5.300 10.300l8.400 7.700-8 7.800M22 3.500l-7.600 7.200 7.600 7.700" fill="none" stroke="#fff" stroke-width="2"/></svg><svg class="b" style="left:82px;top:1534px;" width="24" height="34" viewBox="0 0 24 34"><g fill="none" stroke="#fff" stroke-width="2"><circle cx="11.700" cy="16.100" r="5.700"/><path d="M11.700 2v8.400M11.700 21.800v7.800"/></g></svg><span class="t" style="left:116.0px;top:1534.5px;line-height:33px;font-size:23.5px;color:#ffffff;letter-spacing:1.810px;">2470528b*</span><svg class="b" style="left:258px;top:1535.2px;" width="30" height="30" viewBox="0 0 30 30"><g fill="none" stroke="#fff" stroke-width="2" stroke-linecap="round" stroke-linejoin="round"><g id="sy"><path d="M5.500 14a9.500 9.500 0 0 1 18.300-2.300"/><path d="M19.300 12.300l4.700 2.200 2.300-4.700"/></g><g transform="rotate(180 15 15)"><path d="M5.500 14a9.500 9.500 0 0 1 18.300-2.300"/><path d="M19.300 12.300l4.700 2.200 2.300-4.700"/></g></g></svg><svg class="b" style="left:315px;top:1537px;" width="28" height="28" viewBox="0 0 28 28"><g fill="none" stroke="#fff" stroke-width="2.200"><circle cx="14" cy="14" r="11.500"/><path d="M9 9l10 10M19 9L9 19"/></g></svg><span class="t" style="left:351.0px;top:1534.5px;line-height:33px;font-size:23.5px;color:#ffffff;letter-spacing:-0.070px;">0</span><svg class="b" style="left:372px;top:1536px;" width="28" height="28" viewBox="0 0 28 28"><g fill="none" stroke="#fff" stroke-width="2.200" stroke-linejoin="round"><path d="M14 3l11.500 21h-23z"/><path d="M14 10v8M14 20v2.500"/></g></svg><span class="t" style="left:408.0px;top:1534.5px;line-height:33px;font-size:23.5px;color:#ffffff;letter-spacing:-1.070px;">1</span><svg class="b" style="left:450px;top:1534px;" width="34" height="34" viewBox="0 0 34 34"><g fill="none" stroke="#fff" stroke-width="2.200" stroke-linejoin="round"><path d="M13 6l16 10-7 4M13 6v10"/><g stroke-width="1.800"><ellipse cx="11" cy="24" rx="4.500" ry="6"/><path d="M6.500 20l-3-2.500M15.500 20l3-2.500M6 24H2M16 24h4M6.500 28l-3 3M15.500 28l3 3"/></g></g></svg><span class="t" style="left:489.0px;top:1534.5px;line-height:33px;font-size:23.5px;color:#ffffff;letter-spacing:0.732px;">IVAS MC Decode (ivas-basop)</span><span class="t" style="left:862.0px;top:1534.5px;line-height:33px;font-size:23.5px;color:#ffffff;letter-spacing:0.842px;">clangd: idle</span><svg class="b" style="left:1023.5px;top:1535.5px;" width="29.0" height="29.0" viewBox="0 0 29.0 29.0"><g transform="translate(14.5 14.5) rotate(0)"><g fill="none" stroke="#ffffff" stroke-width="2" stroke-linejoin="round"><path d="M8.12 -2.53L11.34 -1.89L11.34 1.89L8.12 2.53L7.53 3.95L9.36 6.69L6.69 9.36L3.95 7.53L2.53 8.12L1.89 11.34L-1.89 11.34L-2.53 8.12L-3.95 7.53L-6.69 9.36L-9.36 6.69L-7.53 3.95L-8.12 2.53L-11.34 1.89L-11.34 -1.89L-8.12 -2.53L-7.53 -3.95L-9.36 -6.69L-6.69 -9.36L-3.95 -7.53L-2.53 -8.12L-1.89 -11.34L1.89 -11.34L2.53 -8.12L3.95 -7.53L6.69 -9.36L9.36 -6.69L7.53 -3.95z"/><circle cx="0" cy="0" r="3.2"/></g></g></svg><span class="t" style="left:1059.5px;top:1534.5px;line-height:33px;font-size:23.5px;color:#ffffff;letter-spacing:0.449px;">Build</span><svg class="b" style="left:1146px;top:1534px;" width="32" height="34" viewBox="0 0 32 34"><g transform="translate(16 17) scale(.92) translate(-16 -17)" fill="none" stroke="#fff" stroke-width="2.300" stroke-linejoin="round" stroke-linecap="round"><path d="M9 12a7 5 0 0 1 14 0v8a7 8 0 0 1-14 0z"/><path d="M9 12h14M10 8L7 5M22 8l3-3M9 17H4M23 17h5M9.500 23L5 27M22.500 23l4.500 4"/></g></svg><svg class="b" style="left:1208px;top:1535px;" width="28" height="30" viewBox="0 0 28 30"><path d="M5 4.500l17 10.500-17 10.500z" fill="none" stroke="#fff" stroke-width="2.400" stroke-linejoin="round"/></svg><span class="t" style="left:1567.0px;top:1534.5px;line-height:33px;font-size:23.5px;color:#ffffff;letter-spacing:0.938px;">Ln 3481, Col 9</span><span class="t" style="left:1767.0px;top:1534.5px;line-height:33px;font-size:23.5px;color:#ffffff;letter-spacing:0.498px;">Spaces: 4</span><span class="t" style="left:1911.0px;top:1534.5px;line-height:33px;font-size:23.5px;color:#ffffff;letter-spacing:0.685px;">UTF-8</span><span class="t" style="left:2015.5px;top:1534.5px;line-height:33px;font-size:23.5px;color:#ffffff;letter-spacing:-0.963px;">LF</span><span class="t" style="left:2074.5px;top:1534.5px;line-height:33px;font-size:23.5px;color:#ffffff;letter-spacing:-0.970px;">C</span><svg class="b" style="left:2123px;top:1536px;" width="28" height="28" viewBox="0 0 28 28"><g fill="none" stroke="#fff" stroke-width="2.100"><circle cx="14" cy="14" r="11"/><path d="M21.700 6.300L6.300 21.700"/></g></svg><span class="t" style="left:2159.5px;top:1534.5px;line-height:33px;font-size:23.5px;color:#ffffff;letter-spacing:0.719px;">Prettier</span><svg class="b" style="left:2274px;top:1534px;" width="30" height="34" viewBox="0 0 30 34"><g fill="none" stroke="#fff" stroke-width="2.100" stroke-linejoin="round"><path d="M4.300 24.300c2.200-2.500 2.500-5 2.500-10.500a7 7 0 0 1 14 0c0 5.500.300 8 2.500 10.500z"/><path d="M11.300 25a2.600 2.600 0 0 0 5 0"/></g></svg>
</div></body></html>
